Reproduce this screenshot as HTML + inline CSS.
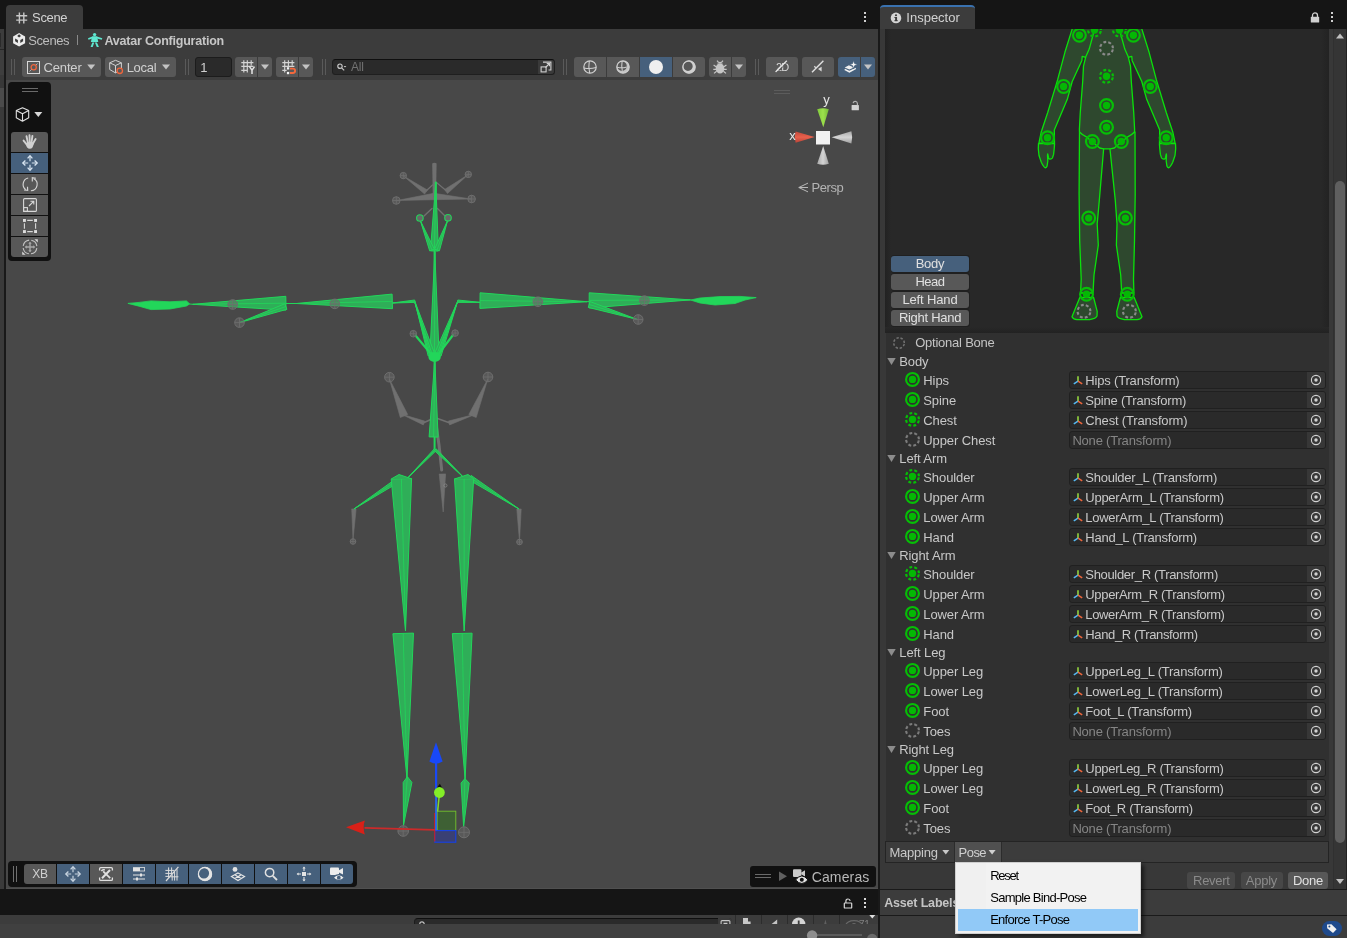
<!DOCTYPE html>
<html><head><meta charset="utf-8"><title>Unity</title>
<style>
*{box-sizing:border-box;margin:0;padding:0}
html,body{width:1347px;height:938px;overflow:hidden;background:#151515;font-family:"Liberation Sans",sans-serif;font-size:12px;color:#c4c4c4}
.abs{position:absolute}
#root{position:relative;width:1347px;height:938px;overflow:hidden;background:#151515}
svg{position:absolute;overflow:visible}
.t{position:absolute;white-space:nowrap;font-family:"Liberation Sans",sans-serif;will-change:transform}
</style></head><body>
<div id="root">
<div class="abs" style="left:0;top:29px;width:4px;height:860px;background:#3c3c3c"></div>
<div class="abs" style="left:0;top:33px;width:1px;height:14px;background:#2a2a2a"></div>
<div class="abs" style="left:0;top:49px;width:4px;height:1px;background:#262626"></div>
<div class="abs" style="left:0;top:50px;width:4px;height:25px;background:#3e3e3e"></div>
<div class="abs" style="left:0;top:75px;width:4px;height:13px;background:#383838"></div>
<div class="abs" style="left:0;top:88px;width:4px;height:19px;background:#4b4b4b"></div>
<div class="abs" style="left:0;top:107px;width:4px;height:782px;background:#3a3a3a"></div>
<div class="abs" style="left:4px;top:29px;width:2px;height:860px;background:#191919"></div>
<div class="abs" style="left:878px;top:29px;width:2px;height:909px;background:#191919"></div>

<div id="scene" class="abs" style="left:6px;top:0;width:872px;height:889px">
<div class="abs" style="left:0;top:5px;width:77px;height:24px;background:#3c3c3c;border-radius:4px 4px 0 0"></div>
<div class="abs" style="left:0;top:29px;width:872px;height:51px;background:#3c3c3c"></div>
<div id="viewport" class="abs" style="left:0;top:80px;width:872px;height:808px;background:#484848;overflow:hidden">
<div class="abs" style="left:-6px;top:-80px;width:1347px;height:938px">
<svg style="left:0;top:0" width="880" height="890" viewBox="0 0 880 890"><path d="M432.2 163.5Q434.5 162 436.6 163.5L436 196H432.8Z" fill="#707070"/><path d="M427.4 190.0L403.5 176.0L424.6 194.0Z" fill="#707070" stroke="#707070" stroke-width="0.6" stroke-linejoin="round"/><path d="M447.5 193.5L468.0 174.8L444.5 189.5Z" fill="#707070" stroke="#707070" stroke-width="0.6" stroke-linejoin="round"/><path d="M426.0 191.0L432.5 185.0" fill="none" stroke="#707070" stroke-width="1.2" stroke-linejoin="round" stroke-linecap="round"/><path d="M446.0 190.5L436.5 182.5" fill="none" stroke="#707070" stroke-width="1.2" stroke-linejoin="round" stroke-linecap="round"/><path d="M433.7 193.3L397.0 200.5L434.3 199.7Z" fill="#707070" stroke="#707070" stroke-width="0.6" stroke-linejoin="round"/><path d="M433.8 199.7L471.0 199.0L434.2 193.3Z" fill="#707070" stroke="#707070" stroke-width="0.6" stroke-linejoin="round"/><path d="M424.0 216.0L432.0 208.5" fill="none" stroke="#707070" stroke-width="1.4" stroke-linejoin="round" stroke-linecap="round"/><path d="M445.0 216.0L437.5 208.5" fill="none" stroke="#707070" stroke-width="1.4" stroke-linejoin="round" stroke-linecap="round"/><circle cx="403.3" cy="175.6" r="3.2" fill="#686868" fill-opacity="0.55" stroke="#6e6e6e" stroke-width="1"/><path d="M400.1 175.6H406.5M403.3 172.4V178.79999999999998" stroke="#6e6e6e" stroke-width="0.8"/><circle cx="468.3" cy="174.4" r="3.2" fill="#686868" fill-opacity="0.55" stroke="#6e6e6e" stroke-width="1"/><path d="M465.1 174.4H471.5M468.3 171.20000000000002V177.6" stroke="#6e6e6e" stroke-width="0.8"/><circle cx="396.3" cy="200.5" r="3.8" fill="#686868" fill-opacity="0.55" stroke="#6e6e6e" stroke-width="1"/><path d="M392.5 200.5H400.1M396.3 196.7V204.3" stroke="#6e6e6e" stroke-width="0.8"/><circle cx="471.6" cy="199" r="3.8" fill="#686868" fill-opacity="0.55" stroke="#6e6e6e" stroke-width="1"/><path d="M467.8 199H475.40000000000003M471.6 195.2V202.8" stroke="#6e6e6e" stroke-width="0.8"/><path d="M407.7 414.5L389.4 379.0L400.3 417.5Z" fill="#707070" stroke="#707070" stroke-width="0.6" stroke-linejoin="round"/><path d="M476.2 417.5L487.8 379.0L468.8 414.5Z" fill="#707070" stroke="#707070" stroke-width="0.6" stroke-linejoin="round"/><path d="M424.7 421.1L401.0 414.0L423.3 424.9Z" fill="#707070" stroke="#707070" stroke-width="0.6" stroke-linejoin="round"/><path d="M449.6 424.9L476.0 414.0L448.4 421.1Z" fill="#707070" stroke="#707070" stroke-width="0.6" stroke-linejoin="round"/><path d="M423.0 423.0L432.0 419.0" fill="none" stroke="#707070" stroke-width="1.6" stroke-linejoin="round" stroke-linecap="round"/><path d="M450.0 423.0L437.5 418.5" fill="none" stroke="#707070" stroke-width="1.6" stroke-linejoin="round" stroke-linecap="round"/><circle cx="389.4" cy="377.2" r="4.8" fill="#686868" fill-opacity="0.55" stroke="#6e6e6e" stroke-width="1"/><path d="M384.59999999999997 377.2H394.2M389.4 372.4V382.0" stroke="#6e6e6e" stroke-width="0.8"/><circle cx="488" cy="377" r="4.8" fill="#686868" fill-opacity="0.55" stroke="#6e6e6e" stroke-width="1"/><path d="M483.2 377H492.8M488 372.2V381.8" stroke="#6e6e6e" stroke-width="0.8"/><path d="M436.6 428.0L439.0 445.0L441.7 470.0" fill="none" stroke="#707070" stroke-width="3" stroke-linejoin="round" stroke-linecap="round"/><path d="M439.2 474.1L443.2 512.0L445.6 473.9Z" fill="#707070" stroke="#707070" stroke-width="0.6" stroke-linejoin="round"/><circle cx="445.4" cy="485.5" r="1.6" fill="none" stroke="#8c8c8c" stroke-width="0.7"/><path d="M351.7 508.9L353.0 540.0L356.1 509.1Z" fill="#707070" stroke="#707070" stroke-width="0.6" stroke-linejoin="round"/><path d="M516.8 509.0L519.5 541.0L521.2 509.0Z" fill="#707070" stroke="#707070" stroke-width="0.6" stroke-linejoin="round"/><circle cx="353" cy="541.5" r="2.8" fill="#686868" fill-opacity="0.55" stroke="#6e6e6e" stroke-width="1"/><path d="M350.2 541.5H355.8M353 538.7V544.3" stroke="#6e6e6e" stroke-width="0.8"/><circle cx="519.5" cy="542" r="2.8" fill="#686868" fill-opacity="0.55" stroke="#6e6e6e" stroke-width="1"/><path d="M516.7 542H522.3M519.5 539.2V544.8" stroke="#6e6e6e" stroke-width="0.8"/><path d="M435.8 182.5L434.6 250.0L434.6 450.0" fill="none" stroke="#22d65a" stroke-width="2" stroke-linejoin="round" stroke-linecap="round"/><path d="M438.4 251.1L435.8 182.5L430.4 250.9Z" fill="#2fae58" stroke="#22d65a" stroke-width="1" stroke-linejoin="round"/><path d="M434.4 251.0L435.8 182.5" stroke="#22d65a" stroke-width="0.8"/><path d="M439.2 357.0L434.8 252.0L429.8 357.0Z" fill="#2fae58" stroke="#22d65a" stroke-width="1" stroke-linejoin="round"/><path d="M434.5 357.0L434.8 252.0" stroke="#22d65a" stroke-width="0.8"/><path d="M438.1 437.1L434.8 359.0L429.1 436.9Z" fill="#2fae58" stroke="#22d65a" stroke-width="1" stroke-linejoin="round"/><path d="M433.6 437.0L434.8 359.0" stroke="#22d65a" stroke-width="0.8"/><path d="M434.3 249.1L420.3 220.5L429.7 250.9Z" fill="#2fae58" stroke="#22d65a" stroke-width="1" stroke-linejoin="round"/><path d="M432.0 250.0L420.3 220.5" stroke="#22d65a" stroke-width="0.8"/><path d="M439.4 250.8L447.6 220.5L434.6 249.2Z" fill="#2fae58" stroke="#22d65a" stroke-width="1" stroke-linejoin="round"/><path d="M437.0 250.0L447.6 220.5" stroke="#22d65a" stroke-width="0.8"/><circle cx="419.9" cy="218" r="3.3" fill="#686868" stroke="#22d65a" stroke-width="1.1"/><circle cx="448" cy="217.8" r="3.3" fill="#686868" stroke="#22d65a" stroke-width="1.1"/><path d="M434.8 354.0L414.8 301.2L428.2 356.0Z" fill="#2fae58" stroke="#22d65a" stroke-width="1" stroke-linejoin="round"/><path d="M431.5 355.0L414.8 301.2" stroke="#22d65a" stroke-width="0.8"/><path d="M441.0 356.2L457.7 301.2L434.4 353.8Z" fill="#2fae58" stroke="#22d65a" stroke-width="1" stroke-linejoin="round"/><path d="M437.7 355.0L457.7 301.2" stroke="#22d65a" stroke-width="0.8"/><path d="M432.4 355.1L415.0 303.0L429.6 355.9Z" fill="#2fae58" stroke="#22d65a" stroke-width="1" stroke-linejoin="round"/><path d="M431.0 355.5L415.0 303.0" stroke="#22d65a" stroke-width="0.8"/><path d="M439.4 356.0L457.0 303.0L436.6 355.0Z" fill="#2fae58" stroke="#22d65a" stroke-width="1" stroke-linejoin="round"/><path d="M438.0 355.5L457.0 303.0" stroke="#22d65a" stroke-width="0.8"/><path d="M415.5 335.5L431.0 354.0" fill="none" stroke="#22d65a" stroke-width="2.2" stroke-linejoin="round" stroke-linecap="round"/><path d="M453.0 335.0L438.5 354.0" fill="none" stroke="#22d65a" stroke-width="2.2" stroke-linejoin="round" stroke-linecap="round"/><ellipse cx="434.6" cy="357" rx="6.2" ry="5" fill="#22d65a"/><circle cx="413.3" cy="333.7" r="3.3" fill="#686868" fill-opacity="0.55" stroke="#6e6e6e" stroke-width="1"/><path d="M410.0 333.7H416.6M413.3 330.4V337.0" stroke="#6e6e6e" stroke-width="0.8"/><circle cx="455.1" cy="333.1" r="3.3" fill="#686868" fill-opacity="0.55" stroke="#6e6e6e" stroke-width="1"/><path d="M451.8 333.1H458.40000000000003M455.1 329.8V336.40000000000003" stroke="#6e6e6e" stroke-width="0.8"/><path d="M414.7 300.0L392.4 303.0L414.9 302.4Z" fill="#2fae58" stroke="#22d65a" stroke-width="1" stroke-linejoin="round"/><path d="M414.8 301.2L392.4 303.0" stroke="#22d65a" stroke-width="0.8"/><path d="M457.6 302.4L480.3 302.4L457.8 300.0Z" fill="#2fae58" stroke="#22d65a" stroke-width="1" stroke-linejoin="round"/><path d="M457.7 301.2L480.3 302.4" stroke="#22d65a" stroke-width="0.8"/><path d="M392.1 294.1L296.7 303.5L392.5 308.7Z" fill="#2fae58" stroke="#22d65a" stroke-width="1" stroke-linejoin="round"/><path d="M392.3 301.4L296.7 303.5" stroke="#22d65a" stroke-width="0.8"/><path d="M296.7 303.5L286.0 303.5" fill="none" stroke="#22d65a" stroke-width="1" stroke-linejoin="round" stroke-linecap="round"/><path d="M285.8 296.3L192.8 304.3L286.0 310.1Z" fill="#2fae58" stroke="#22d65a" stroke-width="1" stroke-linejoin="round"/><path d="M285.9 303.2L192.8 304.3" stroke="#22d65a" stroke-width="0.8"/><path d="M284.9 303.7L239.5 322.6L286.9 309.3Z" fill="#2fae58" stroke="#22d65a" stroke-width="1" stroke-linejoin="round"/><path d="M285.9 306.5L239.5 322.6" stroke="#22d65a" stroke-width="0.8"/><path d="M127.9 303.4L139 302.4L151 300.9L170 301.8L186.5 300.9L189.6 303.9L186.5 306L170 309L151 309.6L139 306.2Z" fill="#22d65a" stroke="#22d65a" stroke-width="0.8"/><path d="M192.8 304.3L189.6 304.0" fill="none" stroke="#22d65a" stroke-width="1" stroke-linejoin="round" stroke-linecap="round"/><circle cx="232.7" cy="304.5" r="4.8" fill="#686868" fill-opacity="0.55" stroke="#6e6e6e" stroke-width="1"/><path d="M227.89999999999998 304.5H237.5M232.7 299.7V309.3" stroke="#6e6e6e" stroke-width="0.8"/><circle cx="334.8" cy="303.9" r="4.8" fill="#686868" fill-opacity="0.55" stroke="#6e6e6e" stroke-width="1"/><path d="M330.0 303.9H339.6M334.8 299.09999999999997V308.7" stroke="#6e6e6e" stroke-width="0.8"/><circle cx="239.5" cy="322.6" r="4.8" fill="#686868" fill-opacity="0.55" stroke="#6e6e6e" stroke-width="1"/><path d="M234.7 322.6H244.3M239.5 317.8V327.40000000000003" stroke="#6e6e6e" stroke-width="0.8"/><path d="M479.9 308.4L586.9 301.7L480.1 292.8Z" fill="#2fae58" stroke="#22d65a" stroke-width="1" stroke-linejoin="round"/><path d="M480.0 300.6L586.9 301.7" stroke="#22d65a" stroke-width="0.8"/><path d="M586.9 301.7L589.2 301.5" fill="none" stroke="#22d65a" stroke-width="1" stroke-linejoin="round" stroke-linecap="round"/><path d="M589.2 308.0L690.5 299.9L589.2 292.8Z" fill="#2fae58" stroke="#22d65a" stroke-width="1" stroke-linejoin="round"/><path d="M589.2 300.4L690.5 299.9" stroke="#22d65a" stroke-width="0.8"/><path d="M588.3 307.4L637.5 319.5L590.1 301.6Z" fill="#2fae58" stroke="#22d65a" stroke-width="1" stroke-linejoin="round"/><path d="M589.2 304.5L637.5 319.5" stroke="#22d65a" stroke-width="0.8"/><path d="M690.5 300L700 298L720 296.6L740 296.4L756.2 297.6L745 300L735 303.5L715 305L700 303Z" fill="#22d65a" stroke="#22d65a" stroke-width="0.8"/><circle cx="537.9" cy="301.7" r="4.8" fill="#686868" fill-opacity="0.55" stroke="#6e6e6e" stroke-width="1"/><path d="M533.1 301.7H542.6999999999999M537.9 296.9V306.5" stroke="#6e6e6e" stroke-width="0.8"/><circle cx="644.4" cy="300.6" r="4.8" fill="#686868" fill-opacity="0.55" stroke="#6e6e6e" stroke-width="1"/><path d="M639.6 300.6H649.1999999999999M644.4 295.8V305.40000000000003" stroke="#6e6e6e" stroke-width="0.8"/><circle cx="638.2" cy="319.5" r="4.8" fill="#686868" fill-opacity="0.55" stroke="#6e6e6e" stroke-width="1"/><path d="M633.4000000000001 319.5H643.0M638.2 314.7V324.3" stroke="#6e6e6e" stroke-width="0.8"/><path d="M400.6 475.4L353.9 509.0L403.4 479.6Z" fill="#2fae58" stroke="#22d65a" stroke-width="1" stroke-linejoin="round"/><path d="M402.0 477.5L353.9 509.0" stroke="#22d65a" stroke-width="0.8"/><path d="M468.5 479.6L519.0 509.0L471.1 475.4Z" fill="#2fae58" stroke="#22d65a" stroke-width="1" stroke-linejoin="round"/><path d="M469.8 477.5L519.0 509.0" stroke="#22d65a" stroke-width="0.8"/><path d="M434.4 448.8L407.1 478.5L436.2 450.6Z" fill="#2fae58" stroke="#22d65a" stroke-width="1" stroke-linejoin="round"/><path d="M435.3 449.7L407.1 478.5" stroke="#22d65a" stroke-width="0.8"/><path d="M434.4 450.6L464.7 478.5L436.2 448.8Z" fill="#2fae58" stroke="#22d65a" stroke-width="1" stroke-linejoin="round"/><path d="M435.3 449.7L464.7 478.5" stroke="#22d65a" stroke-width="0.8"/><path d="M391.2 479.1L405.5 631.0L411.6 478.5Z" fill="#2fae58" stroke="#22d65a" stroke-width="1" stroke-linejoin="round"/><path d="M401.4 478.8L405.5 631.0" stroke="#22d65a" stroke-width="0.8"/><path d="M454.5 478.8L464.2 631.0L473.7 478.8Z" fill="#2fae58" stroke="#22d65a" stroke-width="1" stroke-linejoin="round"/><path d="M464.1 478.8L464.2 631.0" stroke="#22d65a" stroke-width="0.8"/><path d="M391.2 479L399 474.5L411.6 478.8" fill="#2fae58" stroke="#22d65a" stroke-width="1"/><path d="M454.5 479L468 474.5L473.6 478.8" fill="#2fae58" stroke="#22d65a" stroke-width="1"/><path d="M392.9 633.7L407.0 778.8L413.5 633.1Z" fill="#2fae58" stroke="#22d65a" stroke-width="1" stroke-linejoin="round"/><path d="M403.2 633.4L407.0 778.8" stroke="#22d65a" stroke-width="0.8"/><path d="M452.3 633.6L465.1 778.8L472.1 633.2Z" fill="#2fae58" stroke="#22d65a" stroke-width="1" stroke-linejoin="round"/><path d="M462.2 633.4L465.1 778.8" stroke="#22d65a" stroke-width="0.8"/><path d="M407.4 776.7L411.9 782.4L403.5 825.3L403.2 782.4Z" fill="#2fae58" stroke="#22d65a" stroke-width="1" stroke-linejoin="round"/><path d="M407.4 776.7L403.5 825.3" stroke="#22d65a" stroke-width="0.8"/><path d="M464.9 778.6L469.2 783.1L463.6 826.5L461.1 783.1Z" fill="#2fae58" stroke="#22d65a" stroke-width="1" stroke-linejoin="round"/><path d="M464.9 778.6L463.6 826.5" stroke="#22d65a" stroke-width="0.8"/><circle cx="403.2" cy="831" r="5.3" fill="#686868" fill-opacity="0.55" stroke="#6e6e6e" stroke-width="1"/><path d="M397.9 831H408.5M403.2 825.7V836.3" stroke="#6e6e6e" stroke-width="0.8"/><circle cx="464" cy="832.3" r="5.5" fill="#686868" fill-opacity="0.55" stroke="#6e6e6e" stroke-width="1"/><path d="M458.5 832.3H469.5M464 826.8V837.8" stroke="#6e6e6e" stroke-width="0.8"/><rect x="437.2" y="811.2" width="18.6" height="19.2" fill="#3e6034" stroke="#72c22c" stroke-width="0.9"/><rect x="434.8" y="830.6" width="21" height="11.6" fill="#3a4074" stroke="#1540e8" stroke-width="1.1"/><path d="M434.7 813V841.5" stroke="#c02028" stroke-width="1.2"/><path d="M436.1 830.4V760" stroke="#2a6ae8" stroke-width="2"/><path d="M436.1 790V760" stroke="#1848f8" stroke-width="2"/><path d="M429.4 761.5L436 742.2L442.6 761.5Q436 765.5 429.4 761.5Z" fill="#1848f8"/><path d="M434.9 829.8L364.5 827.8" stroke="#cc2a2a" stroke-width="1.8"/><path d="M364.8 820.6L346 827.3L364.8 834.4Q362.5 827.5 364.8 820.6Z" fill="#d82018"/><path d="M439.2 796L437.6 811.5" stroke="#84d830" stroke-width="1.5"/><path d="M436 789L439.8 783.8L443.2 789.5Z" fill="#0c0c0c"/><circle cx="439.4" cy="792.5" r="5.4" fill="#84ee28"/></svg>
<div class="abs" style="left:8px;top:82px;width:43px;height:178.6px;background:#111111;border-radius:4px"></div>
<div class="abs" style="left:22px;top:88px;width:16px;height:1px;background:#6a6a6a;"></div>
<div class="abs" style="left:22px;top:91px;width:16px;height:1px;background:#6a6a6a;"></div>
<svg style="left:15px;top:107px;" width="14" height="15" viewBox="0 0 14 15"><g transform="translate(0.500 0.000)"><path d="M7 0.7L13.2 3.6V10.8L7 14.2L0.8 10.8V3.6Z M0.8 3.6L7 6.8L13.2 3.6M7 6.8V14.2" fill="none" stroke="#e0e0e0" stroke-width="1.1" stroke-linejoin="round"/></g></svg>
<svg style="left:34px;top:112px;" width="8" height="5" viewBox="0 0 8 5"><g transform="translate(0.300 0.000)"><path d="M0 0H8L4 5Z" fill="#d8d8d8"/></g></svg>
<div class="abs" style="left:11px;top:132px;width:37px;height:20px;background:#585858;border-radius:3px 3px 0 0"></div>
<div class="abs" style="left:11px;top:153px;width:37px;height:20px;background:#46607c;border-radius:0"></div>
<div class="abs" style="left:11px;top:174px;width:37px;height:20px;background:#585858;border-radius:0"></div>
<div class="abs" style="left:11px;top:195px;width:37px;height:20px;background:#585858;border-radius:0"></div>
<div class="abs" style="left:11px;top:216px;width:37px;height:20px;background:#585858;border-radius:0"></div>
<div class="abs" style="left:11px;top:237px;width:37px;height:20px;background:#585858;border-radius:0 0 3px 3px"></div>
<svg style="left:22px;top:134px;" width="16" height="16" viewBox="0 0 16 16"><g stroke="#d0d0d0" stroke-width="1.9" stroke-linecap="round" fill="none"><path d="M4.8 10.6L1.6 6.6"/><path d="M5.9 8.6L4.5 2.2"/><path d="M7.7 8L7.5 1.2"/><path d="M9.5 8.4L10.4 2"/><path d="M10.8 9.8L13.6 5"/></g><path d="M3.6 9.2Q7.8 6.4 11.8 8.8Q11.4 14.8 7.8 14.8Q4.6 14.8 3.6 9.2Z" fill="#d0d0d0"/></svg>
<svg style="left:22px;top:155px;" width="16" height="16" viewBox="0 0 16 16"><path d="M8 1V15M1 8H15" stroke="#d8e4f0" stroke-width="1.2" stroke-dasharray="5.2 3.6"/><path d="M5.6 3.4L8 0.8L10.4 3.4M5.6 12.6L8 15.2L10.4 12.6M3.4 5.6L0.8 8L3.4 10.4M12.6 5.6L15.2 8L12.6 10.4" fill="none" stroke="#d8e4f0" stroke-width="1.3"/></svg>
<svg style="left:22px;top:176px;" width="16" height="16" viewBox="0 0 16 16"><g fill="none" stroke="#d4d4d4" stroke-width="1.15"><path d="M11.6 2.4A6.5 6.5 0 0 1 8.9 14.7"/><path d="M6.2 2A6.5 6.5 0 0 0 3.8 13.6"/><path d="M10.3 5.6V1.6L13.9 2.3"/><path d="M5.5 10.8L5.7 14.3L2 14"/></g></svg>
<svg style="left:23px;top:198px;" width="14" height="14" viewBox="0 0 14 14"><rect x="0.6" y="0.6" width="12.8" height="12.8" rx="1" fill="none" stroke="#d8d8d8" stroke-width="1.1"/><rect x="0.6" y="9.6" width="3.8" height="3.8" fill="none" stroke="#d8d8d8" stroke-width="1.1"/><path d="M6 8L10.6 3.4M7.4 3.2H10.8V6.6" fill="none" stroke="#d8d8d8" stroke-width="1.1"/></svg>
<svg style="left:23px;top:219px;" width="14" height="14" viewBox="0 0 14 14"><path d="M4.2 1.4H9.8M4.2 12.6H9.8M1.4 4.2V9.8M12.6 4.2V9.8" fill="none" stroke="#d8d8d8" stroke-width="1.1"/><g fill="#dedede"><rect x="0" y="0" width="2.9" height="2.9"/><rect x="11.1" y="0" width="2.9" height="2.9"/><rect x="0" y="11.1" width="2.9" height="2.9"/><rect x="11.1" y="11.1" width="2.9" height="2.9"/></g></svg>
<svg style="left:22px;top:239px;" width="16" height="16" viewBox="0 0 16 16"><circle cx="8" cy="8" r="6.9" fill="none" stroke="#c4c4c4" stroke-width="1.1" stroke-dasharray="8.6 2.24" stroke-dashoffset="-1.1"/><path d="M8 3.6V12.4M3.6 8H12.4" stroke="#a8a8a8" stroke-width="1.4"/><path d="M6.3 4.8L8 2.8L9.7 4.8Z M6.3 11.2L8 13.2L9.7 11.2Z M4.8 6.3L2.8 8L4.8 9.7Z M11.2 6.3L13.2 8L11.2 9.7Z" fill="#a8a8a8"/><path d="M12.4 0.2H15.8V3.6Z M3.6 15.8H0.2V12.4Z" fill="#d4d4d4"/></svg>
<div class="abs" style="left:774px;top:90px;width:16px;height:1px;background:#5c5c5c;"></div>
<div class="abs" style="left:774px;top:93px;width:16px;height:1px;background:#5c5c5c;"></div>
<svg style="left:0;top:0" width="880" height="220" viewBox="0 0 880 220"><defs>
<linearGradient id="gG" x1="0" x2="1"><stop offset="0" stop-color="#7fc93c"/><stop offset="0.5" stop-color="#9de04c"/><stop offset="1" stop-color="#74b838"/></linearGradient>
<linearGradient id="gR" y1="0" y2="1" x1="0" x2="0"><stop offset="0" stop-color="#c24a3c"/><stop offset="0.5" stop-color="#e8604c"/><stop offset="1" stop-color="#b84438"/></linearGradient>
<linearGradient id="gW" y1="0" y2="1" x1="0" x2="0"><stop offset="0" stop-color="#a8a8a8"/><stop offset="0.5" stop-color="#d4d4d4"/><stop offset="1" stop-color="#a0a0a0"/></linearGradient>
<linearGradient id="gW2" x1="0" x2="1"><stop offset="0" stop-color="#a8a8a8"/><stop offset="0.5" stop-color="#d4d4d4"/><stop offset="1" stop-color="#a0a0a0"/></linearGradient>
</defs>
<path d="M817.2 109.2Q823 107.2 828.8 109.2L823.3 127.2Z" fill="url(#gG)"/>
<path d="M795.6 131.6Q793.8 137.2 795.6 142.8L814.6 137Z" fill="url(#gR)"/>
<path d="M851.4 131.2Q853 137.2 851.4 143.4L831.6 137.2Z" fill="url(#gW)"/>
<path d="M817.2 163.8Q823 165.6 828.8 163.8L823.2 146Z" fill="url(#gW2)"/>
<rect x="816" y="131" width="14" height="13.5" fill="#f2f2f2"/></svg>
<div class="t" style="left:823px;top:91px;font-size:13px;line-height:17px;letter-spacing:-0.300px;color:#e8e8e8;"><span style="position:relative;left:0.20px">y</span></div>
<div class="t" style="left:789px;top:127px;font-size:13px;line-height:17px;letter-spacing:-0.500px;color:#e8e8e8;"><span style="position:relative;left:0.20px">x</span></div>
<svg style="left:851px;top:100px;" width="8" height="10" viewBox="0 0 8 10"><g transform="translate(0.500 0.500)"><rect x="0.1" y="4.5" width="7.3" height="5.2" rx="0.5" fill="#d2d2d2"/><path d="M5.9 4.8V2.8A2.2 2.2 0 0 0 1.6 2.6" fill="none" stroke="#b0b0b0" stroke-width="1.2"/></g></svg>
<svg style="left:798px;top:182px;" width="10.5" height="10" viewBox="0 0 10.5 10"><g transform="translate(0.000 0.500)"><path d="M10 0.6L0.8 5L10 9.4M0.8 5H10" fill="none" stroke="#b8b8b8" stroke-width="1"/></g></svg>
<div class="t" style="left:811px;top:179px;font-size:13px;line-height:17px;letter-spacing:-0.432px;color:#b4b4b4;"><span style="position:relative;left:0.50px">Persp</span></div>
<div class="abs" style="left:8px;top:861px;width:349px;height:26px;background:#111111;border-radius:4px"></div>
<div class="abs" style="left:13px;top:866px;width:1px;height:16px;background:#707070;"></div>
<div class="abs" style="left:16px;top:866px;width:1px;height:16px;background:#707070;"></div>
<div class="abs" style="left:24px;top:864px;width:32px;height:20px;background:#585858;border-radius:3px 0 0 3px"></div>
<div class="abs" style="left:57px;top:864px;width:32px;height:20px;background:#46607c;border-radius:0"></div>
<div class="abs" style="left:90px;top:864px;width:32px;height:20px;background:#585858;border-radius:0"></div>
<div class="abs" style="left:123px;top:864px;width:32px;height:20px;background:#46607c;border-radius:0"></div>
<div class="abs" style="left:156px;top:864px;width:32px;height:20px;background:#46607c;border-radius:0"></div>
<div class="abs" style="left:189px;top:864px;width:32px;height:20px;background:#46607c;border-radius:0"></div>
<div class="abs" style="left:222px;top:864px;width:32px;height:20px;background:#46607c;border-radius:0"></div>
<div class="abs" style="left:255px;top:864px;width:32px;height:20px;background:#46607c;border-radius:0"></div>
<div class="abs" style="left:288px;top:864px;width:32px;height:20px;background:#46607c;border-radius:0"></div>
<div class="abs" style="left:321px;top:864px;width:32px;height:20px;background:#46607c;border-radius:0 3px 3px 0"></div>
<div class="t" style="left:32px;top:866px;font-size:12px;line-height:16px;letter-spacing:-0.255px;color:#d0d0d0;"><span style="position:relative;left:0.25px">XB</span></div>
<svg style="left:65px;top:866px;" width="16" height="16" viewBox="0 0 16 16"><path d="M8 1V15M1 8H15" stroke="#c8d4e0" stroke-width="1.2" stroke-dasharray="5.2 3.6"/><path d="M5.6 3.4L8 0.8L10.4 3.4M5.6 12.6L8 15.2L10.4 12.6M3.4 5.6L0.8 8L3.4 10.4M12.6 5.6L15.2 8L12.6 10.4" fill="none" stroke="#c8d4e0" stroke-width="1.3"/></svg>
<svg style="left:98px;top:866px;" width="16" height="16" viewBox="0 0 16 16"><path d="M1.6 4.6V2.8Q1.6 1.6 2.8 1.6H13.2Q14.4 1.6 14.4 2.8V4.6M1.6 11.4V13.2Q1.6 14.4 2.8 14.4H13.2Q14.4 14.4 14.4 13.2V11.4" fill="none" stroke="#e0e0e0" stroke-width="1.3"/><path d="M4 12.2L12 4" stroke="#e0e0e0" stroke-width="2"/><path d="M5.2 5.4L12.2 12.2" stroke="#e0e0e0" stroke-width="1.7"/><path d="M3.4 5.2Q4.6 3 6.8 4" fill="none" stroke="#e0e0e0" stroke-width="1.5"/></svg>
<svg style="left:131px;top:866px;" width="16" height="16" viewBox="0 0 16 16"><rect x="2" y="1.2" width="12" height="4.2" fill="#e4e4e4"/><rect x="9" y="2" width="4.2" height="2.6" fill="#46607c"/><path d="M2 9H14M2 13H14" stroke="#e4e4e4" stroke-width="1.2"/><rect x="9" y="7.5" width="2" height="3" fill="#e4e4e4"/><rect x="5" y="11.5" width="2" height="3" fill="#e4e4e4"/></svg>
<svg style="left:164px;top:866px;" width="16" height="16" viewBox="0 0 16 16"><path d="M2 15L14.4 0.8" stroke="#dcdcdc" stroke-width="1.2"/><path d="M1.4 4.4H10.4M1.4 7.4H7.8M1.4 10.4H5.2M4.6 1.4V11.6M7.6 1.4V8" stroke="#dcdcdc" stroke-width="1"/><path d="M8.2 8.6V14.6M10.6 5.8V14.6M13 3.2V14.6M6.4 10.8H14.4" stroke="#dcdcdc" stroke-width="1"/></svg>
<svg style="left:197px;top:866px;" width="16" height="16" viewBox="0 0 16 16"><path fill-rule="evenodd" d="M8 0.9A7.1 7.1 0 1 0 8 15.1A7.1 7.1 0 1 0 8 0.9ZM6.9 2.1A5.2 5.2 0 1 1 6.9 12.5A5.2 5.2 0 1 1 6.9 2.1Z" fill="#e4e4e4"/><circle cx="8" cy="8" r="6.6" fill="none" stroke="#e4e4e4" stroke-width="1.2"/></svg>
<svg style="left:230px;top:866px;" width="16" height="16" viewBox="0 0 16 16"><circle cx="5" cy="3.4" r="2.4" fill="#e4e4e4"/><path d="M8 7L14.5 10.5L8 14.5L1.5 10.5Z M4.7 8.8L11.2 12.6M11.3 8.8L4.8 12.6" fill="none" stroke="#e4e4e4" stroke-width="1.2"/></svg>
<svg style="left:263px;top:866px;" width="16" height="16" viewBox="0 0 16 16"><circle cx="6.6" cy="6.6" r="4.2" fill="none" stroke="#e0e0e0" stroke-width="1.5"/><path d="M9.8 9.8L14 14" stroke="#e0e0e0" stroke-width="1.8"/></svg>
<svg style="left:296px;top:866px;" width="16" height="16" viewBox="0 0 16 16"><rect x="6" y="6" width="4" height="4" fill="#e4e4e4"/><path d="M8 1.5V5M8 11V14.5M1.5 8H5M11 8H14.5" stroke="#e4e4e4" stroke-width="1.1"/><path d="M6.4 2.6L8 0.6L9.6 2.6Z M6.4 13.4L8 15.4L9.6 13.4Z M2.6 6.4L0.6 8L2.6 9.6Z M13.4 6.4L15.4 8L13.4 9.6Z" fill="#e4e4e4"/></svg>
<svg style="left:329px;top:866px;" width="16" height="16" viewBox="0 0 16 16"><rect x="1" y="1.5" width="9" height="7.5" rx="1" fill="#ececec"/><path d="M10 4.2L14 2V8.6L10 6.4Z" fill="#ececec"/><path d="M4 11.8Q9.8 5.6 15.6 11.8Q9.8 17.2 4 11.8Z" fill="#ececec" stroke="#46607c" stroke-width="1.2"/><circle cx="9.8" cy="11.7" r="1.9" fill="#46607c"/></svg>
<div class="abs" style="left:750px;top:866px;width:126px;height:21px;background:#111111;border-radius:3px"></div>
<div class="abs" style="left:755px;top:874px;width:16px;height:1px;background:#6a6a6a;"></div>
<div class="abs" style="left:755px;top:877px;width:16px;height:1px;background:#6a6a6a;"></div>
<svg style="left:779px;top:871px;" width="8" height="9.4" viewBox="0 0 8 9.4"><g transform="translate(0.000 0.500)"><path d="M0 0L8 4.7L0 9.4Z" fill="#606060"/></g></svg>
<svg style="left:793px;top:869px;" width="15" height="15" viewBox="0 0 15 15"><rect x="0" y="0.3" width="8.4" height="7.8" rx="1" fill="#cacaca"/><path d="M8.2 3.4L12 1.2V7.4L8.2 5.2Z" fill="#cacaca"/><path d="M2.6 10.9Q8.8 3 15 10.9Q8.8 18 2.6 10.9Z" fill="#e4e4e4" stroke="#111" stroke-width="1"/><circle cx="8.8" cy="10.8" r="2" fill="#111"/></svg>
<div class="t" style="left:811px;top:868px;font-size:14px;line-height:18px;letter-spacing:0.144px;color:#b8b8b8;"><span style="position:relative;left:0.70px">Cameras</span></div>
</div>
</div>
<div class="abs" style="left:0;top:888px;width:872px;height:1px;background:#505050"></div>
<svg style="left:10px;top:12px;" width="11" height="11" viewBox="0 0 11 11"><g transform="translate(0.200 0.500)"><path d="M3.2 0V11M7.6 0V11M0 3.3H11M0 7.6H11" stroke="#c8c8c8" stroke-width="1.4" fill="none"/></g></svg>
<div class="t" style="left:26px;top:9px;font-size:13px;line-height:17px;letter-spacing:-0.372px;color:#d2d2d2;"><span style="position:relative;left:0.10px">Scene</span></div>
<div class="abs" style="left:857.8px;top:12px;width:2px;height:2px;background:#d0d0d0;"></div>
<div class="abs" style="left:857.8px;top:16px;width:2px;height:2px;background:#d0d0d0;"></div>
<div class="abs" style="left:857.8px;top:20px;width:2px;height:2px;background:#d0d0d0;"></div>
<svg style="left:6px;top:32px;" width="13" height="14" viewBox="0 0 13 14"><g transform="translate(0.600 0.800)"><path d="M6.5 0.2 L12.5 3.6 V10.4 L6.5 13.8 L0.5 10.4 V3.6 Z" fill="#ececec"/>
<path d="M6.5 1.5 L4.6 3.2 L6.5 4.7 L8.4 3.2Z M2.5 5.7V8.5L5.3 10.1V7.3Z M10.5 5.7V8.5L7.7 10.1V7.3Z" fill="#3c3c3c"/>
<path d="M3.4 12.4L5.2 13.8H3Z M9.6 12.4L7.8 13.8H10Z" fill="#3c3c3c"/></g></svg>
<div class="t" style="left:22px;top:32px;font-size:13px;line-height:17px;letter-spacing:-0.393px;color:#bdbdbd;"><span style="position:relative;left:0.20px">Scenes</span></div>
<div class="abs" style="left:71.3px;top:35px;width:1px;height:10px;background:#8a8a8a;"></div>
<svg style="left:82px;top:32px;" width="15" height="15" viewBox="0 0 15 15"><g transform="translate(0.000 0.700)"><g fill="#5ee6cf"><circle cx="6.6" cy="1.9" r="1.7"/>
<path d="M4.3 3.7L0 5.5L0.5 7L4.3 5.8Z M8.9 3.7L14.3 5.5L13.8 7L8.9 5.8Z"/>
<path d="M4.2 3.5H9L10.3 9.2H2.9Z"/>
<path d="M4.3 9.8H6.3L4.7 14.2H2.6Z M6.9 9.8H8.9L10.9 14.2H8.8Z"/></g></g></svg>
<div class="t" style="left:98px;top:33px;font-size:12.5px;line-height:16.5px;letter-spacing:-0.217px;color:#c6c6c6;font-weight:bold;"><span style="position:relative;left:0.50px">Avatar Configuration</span></div>
<div class="abs" style="left:5px;top:59px;width:1px;height:16px;background:#5a5a5a;"></div><div class="abs" style="left:8px;top:59px;width:1px;height:16px;background:#5a5a5a;"></div>
<div class="abs" style="left:16px;top:57px;width:79px;height:20px;background:#585858;border-radius:3px"></div>
<svg style="left:21px;top:61px;" width="13" height="13" viewBox="0 0 13 13"><rect x="0.5" y="0.5" width="12" height="12" fill="none" stroke="#d8d8d8" stroke-width="1"/><path d="M2.5 10.5L10.5 2.5" stroke="#b8b8b8" stroke-width="0.9"/><circle cx="6.7" cy="6.3" r="2.6" fill="#585858" stroke="#f0653c" stroke-width="1.3"/></svg>
<div class="t" style="left:37px;top:59px;font-size:13px;line-height:17px;letter-spacing:-0.170px;color:#d0d0d0;"><span style="position:relative;left:0.60px">Center</span></div>
<svg style="left:81px;top:64px;" width="8" height="5" viewBox="0 0 8 5"><g transform="translate(0.200 0.500)"><path d="M0 0H8L4.0 5Z" fill="#c4c4c4"/></g></svg>
<div class="abs" style="left:99px;top:57px;width:71px;height:20px;background:#585858;border-radius:3px"></div>
<svg style="left:103px;top:59px;" width="15" height="15" viewBox="0 0 15 15"><g transform="translate(0.000 0.500)"><path d="M6.5 0.8 L12.4 3.3 V10 L6.5 13.4 L0.7 10 V3.3Z M0.7 3.3 L6.5 6 L12.4 3.3 M6.5 6V13.4" fill="none" stroke="#d0d0d0" stroke-width="1"/><circle cx="10.8" cy="11.3" r="2.7" fill="#585858" stroke="#f0653c" stroke-width="1.3"/></g></svg>
<div class="t" style="left:120px;top:59px;font-size:13px;line-height:17px;letter-spacing:-0.295px;color:#d0d0d0;"><span style="position:relative;left:0.70px">Local</span></div>
<svg style="left:156px;top:64px;" width="8" height="5" viewBox="0 0 8 5"><g transform="translate(0.000 0.500)"><path d="M0 0H8L4.0 5Z" fill="#c4c4c4"/></g></svg>
<div class="abs" style="left:179px;top:59px;width:1px;height:16px;background:#5a5a5a;"></div><div class="abs" style="left:182px;top:59px;width:1px;height:16px;background:#5a5a5a;"></div>
<div class="abs" style="left:189px;top:57px;width:37px;height:20px;background:#2a2a2a;border-radius:3px;border:1px solid #1c1c1c"></div>
<div class="t" style="left:194px;top:59px;font-size:13px;line-height:17px;letter-spacing:-0.256px;color:#d0d0d0;"><span style="position:relative;left:0.30px">1</span></div>
<div class="abs" style="left:229px;top:57px;width:22px;height:20px;background:#585858;border-radius:3px 0 0 3px"></div>
<div class="abs" style="left:252px;top:57px;width:14px;height:20px;background:#585858;border-radius:0 3px 3px 0"></div>
<svg style="left:235px;top:60px;" width="14" height="14" viewBox="0 0 14 14"><path d="M2.8 0.2V12.5M6.3 0.2V12.5M10.2 0.2V5.6M0.3 2.6H12.4M0.3 6.3H12.4M0.3 10.3H6.8" stroke="#d4d4d4" stroke-width="1.15" fill="none"/><path d="M8.5 6.6L11 10.2L13.5 6.6M11 10.2V13.9" stroke="#e4e4e4" stroke-width="1.5" fill="none"/></svg>
<svg style="left:255px;top:64px;" width="8" height="5" viewBox="0 0 8 5"><g transform="translate(0.000 0.500)"><path d="M0 0H8L4.0 5Z" fill="#c4c4c4"/></g></svg>
<div class="abs" style="left:270px;top:57px;width:22px;height:20px;background:#585858;border-radius:3px 0 0 3px"></div>
<div class="abs" style="left:293px;top:57px;width:14px;height:20px;background:#585858;border-radius:0 3px 3px 0"></div>
<svg style="left:276px;top:60px;" width="15" height="15" viewBox="0 0 15 15"><path d="M2.7 0.2V12.5M6.4 0.2V6.6M10.2 0.2V5.6M0.3 2.6H12.4M0.3 6.3H12.4M0.3 10.3H4.6" stroke="#d4d4d4" stroke-width="1.15" fill="none"/><rect x="4.9" y="7.2" width="2.3" height="2.3" fill="#f4f4f4"/><rect x="4.9" y="11.9" width="2.3" height="2.3" fill="#f4f4f4"/><path d="M8 8.6H10.9A2.2 2.2 0 0 1 10.9 13H8" stroke="#f4683c" stroke-width="1.9" fill="none"/></svg>
<svg style="left:296px;top:64px;" width="8" height="5" viewBox="0 0 8 5"><g transform="translate(0.000 0.500)"><path d="M0 0H8L4.0 5Z" fill="#c4c4c4"/></g></svg>
<div class="abs" style="left:316px;top:59px;width:1px;height:16px;background:#5a5a5a;"></div><div class="abs" style="left:319px;top:59px;width:1px;height:16px;background:#5a5a5a;"></div>
<div class="abs" style="left:326px;top:59px;width:223px;height:16px;background:#2a2a2a;border-radius:3.5px;border:1px solid #1f1f1f;border-top-color:#0f0f0f"></div>
<div class="abs" style="left:532px;top:60px;width:16px;height:14px;background:#3a3a3a;border-radius:0 3px 3px 0"></div>
<svg style="left:331px;top:63px;" width="10" height="9" viewBox="0 0 10 9"><g transform="translate(0.000 0.200)"><circle cx="3" cy="3" r="2.2" fill="none" stroke="#c8c8c8" stroke-width="1.2"/><path d="M4.6 4.6L7.2 7.2" stroke="#c8c8c8" stroke-width="1.2"/><path d="M6.6 2.7H9.4L8 4.2Z" fill="#c8c8c8"/></g></svg>
<div class="t" style="left:345px;top:59px;font-size:12px;line-height:16px;letter-spacing:-0.245px;color:#727272;"><span style="position:relative;left:0.00px">All</span></div>
<svg style="left:534px;top:61px;" width="11" height="11" viewBox="0 0 11 11"><g transform="translate(0.500 0.500)"><path d="M2.5 0.6H10.4V8.5H8" fill="none" stroke="#d0d0d0" stroke-width="1.1"/><rect x="0.6" y="5.4" width="5" height="5" fill="none" stroke="#d0d0d0" stroke-width="1.1"/><path d="M5 6L9 2M6.2 2H9V4.8" fill="none" stroke="#d0d0d0" stroke-width="1.1"/></g></svg>
<div class="abs" style="left:557px;top:59px;width:1px;height:16px;background:#5a5a5a;"></div><div class="abs" style="left:560px;top:59px;width:1px;height:16px;background:#5a5a5a;"></div>
<div class="abs" style="left:568px;top:57px;width:32px;height:20px;background:#585858;border-radius:3px 0 0 3px"></div>
<div class="abs" style="left:601px;top:57px;width:32px;height:20px;background:#585858;"></div>
<div class="abs" style="left:634px;top:57px;width:32px;height:20px;background:#46607c;"></div>
<div class="abs" style="left:667px;top:57px;width:32px;height:20px;background:#585858;border-radius:0 3px 3px 0"></div>
<svg style="left:577px;top:60px;" width="14" height="14" viewBox="0 0 14 14"><circle cx="7" cy="7" r="6.2" fill="none" stroke="#d0d0d0" stroke-width="1.2"/><path d="M6.3 0.9Q5.2 7 6.7 13.1M0.9 7.9Q7 9.4 13.1 7.5" fill="none" stroke="#d0d0d0" stroke-width="1.05"/></svg>
<svg style="left:610px;top:60px;" width="14" height="14" viewBox="0 0 14 14"><path fill-rule="evenodd" d="M7 0.8A6.2 6.2 0 1 0 7 13.2A6.2 6.2 0 1 0 7 0.8ZM6 1.4A4.8 4.8 0 1 1 6 11A4.8 4.8 0 1 1 6 1.4Z" fill="#c4c4c4"/><circle cx="7" cy="7" r="6.2" fill="none" stroke="#d0d0d0" stroke-width="1.2"/><path d="M6.1 1.2Q5.3 6 6.3 10.8M1.2 7.2Q6 8.5 10.7 6.9" fill="none" stroke="#d0d0d0" stroke-width="1.05"/></svg>
<svg style="left:643px;top:60px;" width="14" height="14" viewBox="0 0 14 14"><circle cx="7" cy="7" r="7" fill="#efefef"/></svg>
<svg style="left:676px;top:60px;" width="14" height="14" viewBox="0 0 14 14"><path fill-rule="evenodd" d="M7 0.6A6.4 6.4 0 1 0 7 13.4A6.4 6.4 0 1 0 7 0.6ZM6 1.6A4.7 4.7 0 1 1 6 11A4.7 4.7 0 1 1 6 1.6Z" fill="#d0d0d0"/><circle cx="7" cy="7" r="6.2" fill="none" stroke="#d0d0d0" stroke-width="1.2"/></svg>
<div class="abs" style="left:703px;top:57px;width:22px;height:20px;background:#585858;border-radius:3px 0 0 3px"></div>
<div class="abs" style="left:726px;top:57px;width:14px;height:20px;background:#585858;border-radius:0 3px 3px 0"></div>
<svg style="left:707px;top:60px;" width="14" height="14" viewBox="0 0 14 14"><ellipse cx="7" cy="8.4" rx="4.3" ry="5.2" fill="#c6c6c6"/><path d="M4.2 3.6A2.9 2.6 0 0 1 9.8 3.6Z" fill="#c6c6c6"/><path d="M0.6 5L3.4 7M13.4 5L10.6 7M0.3 9.3H3M13.7 9.3H11M1 13.4L3.6 11.2M13 13.4L10.4 11.2M4 0.6L5.4 2.2M10 0.6L8.6 2.2" stroke="#c6c6c6" stroke-width="1.2" fill="none"/></svg>
<svg style="left:729px;top:64px;" width="8" height="5" viewBox="0 0 8 5"><g transform="translate(0.000 0.500)"><path d="M0 0H8L4.0 5Z" fill="#c4c4c4"/></g></svg>
<div class="abs" style="left:749px;top:59px;width:1px;height:16px;background:#5a5a5a;"></div><div class="abs" style="left:752px;top:59px;width:1px;height:16px;background:#5a5a5a;"></div>
<div class="abs" style="left:760px;top:57px;width:32px;height:20px;background:#585858;border-radius:3px"></div>
<div class="t" style="left:769px;top:60px;font-size:11px;line-height:15px;letter-spacing:-0.730px;color:#d8d8d8;"><span style="position:relative;left:0.90px">2D</span></div>
<svg style="left:760px;top:57px;" width="32" height="20" viewBox="0 0 32 20"><path d="M9.6 15L20.8 3.8" stroke="#e0e0e0" stroke-width="1.4"/><path d="M10.6 16L21.8 4.8" stroke="#585858" stroke-width="0.9"/></svg>
<div class="abs" style="left:796px;top:57px;width:32px;height:20px;background:#585858;border-radius:3px"></div>
<svg style="left:796px;top:57px;" width="32" height="20" viewBox="0 0 32 20"><path d="M10 15.2L21.4 3.8" stroke="#e0e0e0" stroke-width="1.4"/><path d="M16 12L19.6 9.8V14.4Z" fill="#d8d8d8"/><path d="M12.4 9.2L14 11.4" stroke="#d8d8d8" stroke-width="1.3"/></svg>
<div class="abs" style="left:832px;top:57px;width:22px;height:20px;background:#46607c;border-radius:3px 0 0 3px"></div>
<div class="abs" style="left:855px;top:57px;width:14px;height:20px;background:#46607c;border-radius:0 3px 3px 0"></div>
<svg style="left:838px;top:60px;" width="13" height="12" viewBox="0 0 13 12"><g transform="translate(0.400 0.600)"><path d="M0.3 6.8L4.6 4.6L9.4 6.8L5 9Z" fill="#f0f0f0"/><path d="M0.3 8.8L5 11.2L11.4 7.8" stroke="#f0f0f0" stroke-width="1.6" fill="none"/><path d="M9.2 -0.4L10.3 2.9L13.6 4L10.3 5.1L9.2 8.4L8.1 5.1L4.8 4L8.1 2.9Z" fill="#f6f6f6" stroke="#46607c" stroke-width="0.9"/></g></svg>
<svg style="left:858px;top:64px;" width="8" height="5" viewBox="0 0 8 5"><g transform="translate(0.000 0.500)"><path d="M0 0H8L4.0 5Z" fill="#c4c4c4"/></g></svg>
</div>

<div class="abs" style="left:0px;top:915px;width:878px;height:9px;background:#3c3c3c;"></div>
<div class="abs" style="left:0px;top:924px;width:878px;height:14px;background:#404040;"></div>
<div class="abs" style="left:6px;top:915px;width:872px;height:9px;overflow:hidden"><div class="abs" style="left:408px;top:3px;width:318px;height:16px;background:#2a2a2a;border-radius:4px;border:1px solid #1c1c1c;border-top-color:#0f0f0f"></div><div class="abs" style="left:712px;top:3px;width:14px;height:16px;background:#3a3a3a;border-radius:0 3px 3px 0"></div><svg style="left:413px;top:6px;" width="6" height="6" viewBox="0 0 6 6"><circle cx="3" cy="3" r="2.2" fill="none" stroke="#c0c0c0" stroke-width="1.2"/></svg><svg style="left:714px;top:5px;" width="10" height="10" viewBox="0 0 10 10"><g transform="translate(0.500 0.000)"><rect x="0.6" y="0.6" width="8.8" height="8.8" rx="1" fill="none" stroke="#c8c8c8" stroke-width="1.1"/><path d="M3 3.4H6.4V6.6M6.4 3.4L2.6 7" fill="none" stroke="#c8c8c8" stroke-width="1.1"/></g></svg><div class="abs" style="left:729px;top:0px;width:1px;height:9px;background:#2c2c2c;"></div><div class="abs" style="left:755px;top:0px;width:1px;height:9px;background:#2c2c2c;"></div><div class="abs" style="left:780.5px;top:0px;width:1px;height:9px;background:#2c2c2c;"></div><div class="abs" style="left:806.5px;top:0px;width:1px;height:9px;background:#2c2c2c;"></div><div class="abs" style="left:832.5px;top:0px;width:1px;height:9px;background:#2c2c2c;"></div><svg style="left:735px;top:3px;" width="9" height="8" viewBox="0 0 9 8"><g transform="translate(0.600 0.000)"><path d="M1.4 0H6.4V3.4H9V8H1.4Z" fill="#c8c8c8"/></g></svg><svg style="left:763px;top:4px;" width="8" height="6" viewBox="0 0 8 6"><g transform="translate(0.800 0.500)"><path d="M0 6L7.4 0V6Z" fill="#c4c4c4"/></g></svg><svg style="left:786px;top:2px;" width="14" height="14" viewBox="0 0 14 14"><g transform="translate(0.000 0.500)"><circle cx="6.7" cy="6.7" r="6.7" fill="#d4d4d4"/><rect x="5.8" y="3" width="1.8" height="5" fill="#3c3c3c"/></g></svg><svg style="left:814px;top:4px;" width="11" height="6" viewBox="0 0 11 6"><g transform="translate(0.000 0.500)"><path d="M5.4 0L6.6 4.6H4.2Z M0.4 4.4H10.4V6H0.4Z" fill="#606060"/></g></svg><svg style="left:840px;top:4px;" width="18" height="8" viewBox="0 0 18 8"><g transform="translate(0.000 0.500)"><ellipse cx="8" cy="5.6" rx="8" ry="4.4" fill="none" stroke="#686868" stroke-width="1.3"/><circle cx="8" cy="6" r="2.4" fill="#686868"/></g></svg><div class="t" style="left:853px;top:3px;font-size:10px;line-height:14px;letter-spacing:-0.197px;color:#808080;"><span style="position:relative;left:0.00px">71</span></div></div>
<svg style="left:869px;top:915px;" width="6" height="3.6" viewBox="0 0 6 3.6"><g transform="translate(0.300 0.000)"><path d="M0 0H6L3 3.6Z" fill="#e0e0e0"/></g></svg>
<div class="abs" style="left:812px;top:934px;width:50px;height:2px;background:#5c5c5c;"></div>
<svg style="left:806px;top:930px;" width="10.4" height="10.4" viewBox="0 0 10.4 10.4"><g transform="translate(0.900 0.200)"><circle cx="5.2" cy="5.2" r="5.2" fill="#8e8e8e"/></g></svg>
<svg style="left:867px;top:933px;" width="10.4" height="10.4" viewBox="0 0 10.4 10.4"><g transform="translate(0.000 0.800)"><circle cx="5.2" cy="5.2" r="5.2" fill="#6a6a6a"/></g></svg>
<svg style="left:843px;top:898px;" width="9" height="11" viewBox="0 0 9 11"><g transform="translate(0.500 0.000)"><rect x="0.8" y="5" width="7.4" height="5" rx="0.6" fill="none" stroke="#d8d8d8" stroke-width="1.2"/><path d="M2.4 5V3.2A2.1 2.1 0 0 1 6.6 3" fill="none" stroke="#d8d8d8" stroke-width="1.2"/></g></svg>
<div class="abs" style="left:864px;top:897.5px;width:2px;height:2px;background:#d8d8d8;"></div>
<div class="abs" style="left:864px;top:901.5px;width:2px;height:2px;background:#d8d8d8;"></div>
<div class="abs" style="left:864px;top:905.5px;width:2px;height:2px;background:#d8d8d8;"></div>

<div id="insp">
<div class="abs" style="left:880px;top:5px;width:95px;height:24px;background:#3c3c3c;border-radius:4px 4px 0 0;border-top:2px solid #3a72b0"></div>
<div class="abs" style="left:880px;top:29px;width:467px;height:909px;background:#383838"></div>
<svg style="left:890px;top:12px;" width="10.6" height="10.6" viewBox="0 0 12 12"><g transform="translate(0.792 0.679)"><circle cx="6" cy="6" r="6" fill="#d4d4d4"/><rect x="5" y="5" width="2.2" height="4.6" fill="#3c3c3c"/><rect x="4.2" y="8.6" width="3.8" height="1.1" fill="#3c3c3c"/><rect x="4.2" y="5" width="2" height="1.1" fill="#3c3c3c"/><circle cx="6" cy="3" r="1.25" fill="#3c3c3c"/></g></svg>
<div class="t" style="left:906px;top:9px;font-size:13px;line-height:17px;letter-spacing:0.003px;color:#d2d2d2;"><span style="position:relative;left:0.30px">Inspector</span></div>
<svg style="left:1310px;top:12px;" width="9" height="11" viewBox="0 0 9 11"><g transform="translate(0.500 0.000)"><rect x="0.3" y="4.8" width="8.4" height="5.8" rx="0.6" fill="#d0d0d0"/><path d="M2 5V3.4A2.5 2.5 0 0 1 7 3.4V5" fill="none" stroke="#d0d0d0" stroke-width="1.3"/></g></svg>
<div class="abs" style="left:1331px;top:12px;width:2px;height:2px;background:#d0d0d0;"></div>
<div class="abs" style="left:1331px;top:16px;width:2px;height:2px;background:#d0d0d0;"></div>
<div class="abs" style="left:1331px;top:20px;width:2px;height:2px;background:#d0d0d0;"></div>
<div class="abs" style="left:885px;top:29px;width:444px;height:301px;background:#282828;background:linear-gradient(90deg,#222 0,#282828 6px,#282828 436px,#232323 444px)"></div>
<svg style="left:0;top:0" width="1347" height="330" viewBox="0 0 1347 330"><defs><clipPath id="cpv"><rect x="885" y="29" width="444" height="300"/></clipPath></defs><g clip-path="url(#cpv)"><path d="M1079.5 132 L1079.1 194 L1079.7 241 L1081.2 279 L1080.6 293 L1093 293 L1094 275 L1098.3 245.2 L1097.2 223.9 L1099.3 200.4 L1103.6 149.2 L1103.6 140 Z" fill="#2e482e" stroke="#0be20b" stroke-width="1.3" stroke-linejoin="round"/><path d="M1135 132 L1135.2 194 L1134.5 241 L1133.5 279 L1133.9 293 L1121.7 293 L1120.7 275 L1116.4 245.2 L1117 223.9 L1115.3 200.4 L1110 149.2 L1110 140 Z" fill="#2e482e" stroke="#0be20b" stroke-width="1.3" stroke-linejoin="round"/><path d="M1079.8 297.5 L1072 316.7 Q1073 319.2 1077 319.6 L1089.7 319.6 Q1096 318.5 1097 316 L1097.2 311.3 L1093.6 297.5 Z" fill="#2e482e" stroke="#0be20b" stroke-width="1.3" stroke-linejoin="round"/><path d="M1134.2 297.5 L1142 316.7 Q1141 319.2 1137 319.6 L1124.3 319.6 Q1118 318.5 1117 316 L1116.8 311.3 L1120.4 297.5 Z" fill="#2e482e" stroke="#0be20b" stroke-width="1.3" stroke-linejoin="round"/><path d="M1075 20 L1064.9 52.3 L1057.6 79.9 L1047.8 112.3 L1041.3 131.7 L1038.9 143.1 L1054.5 143.1 L1054.3 130 L1067.3 99.3 L1072.2 81.5 L1081.9 60.4 L1082.2 56.4 L1088 58 L1094.5 34 L1095 24 Z" fill="#2e482e" stroke="#0be20b" stroke-width="1.3" stroke-linejoin="round"/><path d="M1139 20 L1149.1 52.3 L1156.4 79.9 L1166.2 112.3 L1172.7 131.7 L1175.1 143.1 L1159.5 143.1 L1159.7 130 L1146.7 99.3 L1141.8 81.5 L1132.1 60.4 L1131.8 56.4 L1126 58 L1119.5 34 L1119 24 Z" fill="#2e482e" stroke="#0be20b" stroke-width="1.3" stroke-linejoin="round"/><path d="M1038.5 143.6 L1038.3 148.8 L1039 155.5 L1041.3 162.2 Q1043.5 166.8 1045.2 167.8 Q1046.6 167.4 1047.1 166 L1047.8 161 L1047.5 155.5 L1047.7 153.8 L1048.5 157.7 Q1049 159.2 1050.1 159.1 Q1051.8 158.9 1052.4 158 L1053.6 154.4 L1054.2 148.8 L1054.6 143.6 Z" fill="#2e482e" stroke="#0be20b" stroke-width="1.3" stroke-linejoin="round"/><path d="M1175.5 143.6 L1175.7 148.8 L1175.0 155.5 L1172.7 162.2 Q1170.5 166.8 1168.8 167.8 Q1167.4 167.4 1166.9 166.0 L1166.2 161.0 L1166.5 155.5 L1166.3 153.8 L1165.5 157.7 Q1165.0 159.2 1163.9 159.1 Q1162.2 158.9 1161.6 158.0 L1160.4 154.4 L1159.8 148.8 L1159.4 143.6 Z" fill="#2e482e" stroke="#0be20b" stroke-width="1.3" stroke-linejoin="round"/><path d="M1093 20 L1093.2 34.5 L1089.2 49.1 L1085.9 56.4 L1083.5 66.1 L1082.7 81.5 L1080.3 112.3 L1079.4 129.3 L1079.5 132 Q1083 135.5 1085.9 136.6 L1099.7 148 L1103.8 148.8 L1110.2 148.8 L1114.3 148 L1128.1 136.6 Q1131 135.5 1134.5 132 L1134.6 129.3 L1133.7 112.3 L1131.3 81.5 L1130.5 66.1 L1128.1 56.4 L1124.8 49.1 L1120.8 34.5 L1121 20 Z" fill="#2e482e" stroke="#0be20b" stroke-width="1.3" stroke-linejoin="round"/><circle cx="1079.4" cy="35.3" r="6.4" fill="none" stroke="#06c006" stroke-width="2.2"/><circle cx="1079.4" cy="35.3" r="3.7" fill="#04b804"/><circle cx="1133.4" cy="35.3" r="6.4" fill="none" stroke="#06c006" stroke-width="2.2"/><circle cx="1133.4" cy="35.3" r="3.7" fill="#04b804"/><circle cx="1106.5" cy="48.3" r="6.4" fill="none" stroke="#8a8a8a" stroke-width="2.1" stroke-dasharray="2.9 2.127" stroke-dashoffset="-1.06"/><circle cx="1106.5" cy="76.3" r="6.4" fill="none" stroke="#06c006" stroke-width="2.2" stroke-dasharray="2.9 2.127" stroke-dashoffset="-1.06"/><circle cx="1106.5" cy="76.3" r="3.7" fill="#04b804"/><circle cx="1106.5" cy="105.5" r="6.4" fill="none" stroke="#06c006" stroke-width="2.2"/><circle cx="1106.5" cy="105.5" r="3.7" fill="#04b804"/><circle cx="1106.5" cy="127.2" r="6.4" fill="none" stroke="#06c006" stroke-width="2.2"/><circle cx="1106.5" cy="127.2" r="3.7" fill="#04b804"/><circle cx="1063.6" cy="86.4" r="6.4" fill="none" stroke="#06c006" stroke-width="2.2"/><circle cx="1063.6" cy="86.4" r="3.7" fill="#04b804"/><circle cx="1150.3" cy="86.4" r="6.4" fill="none" stroke="#06c006" stroke-width="2.2"/><circle cx="1150.3" cy="86.4" r="3.7" fill="#04b804"/><circle cx="1047.5" cy="137.7" r="6.4" fill="none" stroke="#06c006" stroke-width="2.2"/><circle cx="1047.5" cy="137.7" r="3.7" fill="#04b804"/><circle cx="1166.2" cy="137.7" r="6.4" fill="none" stroke="#06c006" stroke-width="2.2"/><circle cx="1166.2" cy="137.7" r="3.7" fill="#04b804"/><circle cx="1092.4" cy="141.5" r="6.4" fill="none" stroke="#06c006" stroke-width="2.2"/><circle cx="1092.4" cy="141.5" r="3.7" fill="#04b804"/><circle cx="1121.3" cy="141.5" r="6.4" fill="none" stroke="#06c006" stroke-width="2.2"/><circle cx="1121.3" cy="141.5" r="3.7" fill="#04b804"/><circle cx="1094.5" cy="30" r="6.4" fill="none" stroke="#06c006" stroke-width="2.2" stroke-dasharray="2.9 2.127" stroke-dashoffset="-1.06"/><circle cx="1094.5" cy="30" r="3.7" fill="#04b804"/><circle cx="1119.5" cy="30" r="6.4" fill="none" stroke="#06c006" stroke-width="2.2" stroke-dasharray="2.9 2.127" stroke-dashoffset="-1.06"/><circle cx="1119.5" cy="30" r="3.7" fill="#04b804"/><circle cx="1088.7" cy="218.1" r="6.4" fill="none" stroke="#06c006" stroke-width="2.2"/><circle cx="1088.7" cy="218.1" r="3.7" fill="#04b804"/><circle cx="1125.4" cy="218.1" r="6.4" fill="none" stroke="#06c006" stroke-width="2.2"/><circle cx="1125.4" cy="218.1" r="3.7" fill="#04b804"/><circle cx="1086.5" cy="294.3" r="6.4" fill="none" stroke="#06c006" stroke-width="2.2"/><circle cx="1086.5" cy="294.3" r="3.7" fill="#04b804"/><circle cx="1127.3" cy="294.3" r="6.4" fill="none" stroke="#06c006" stroke-width="2.2"/><circle cx="1127.3" cy="294.3" r="3.7" fill="#04b804"/><circle cx="1084" cy="311.3" r="6.4" fill="none" stroke="#8a8a8a" stroke-width="2.1" stroke-dasharray="2.9 2.127" stroke-dashoffset="-1.06"/><circle cx="1129.4" cy="311.3" r="6.4" fill="none" stroke="#8a8a8a" stroke-width="2.1" stroke-dasharray="2.9 2.127" stroke-dashoffset="-1.06"/></g></svg>
<div class="abs" style="left:885px;top:327px;width:444px;height:6px;background:#242424;background:linear-gradient(#282828,#222222)"></div>
<div class="abs" style="left:890.5px;top:255px;width:79px;height:18px;background:#202020;border-radius:3px"></div>
<div class="abs" style="left:891px;top:256px;width:78px;height:16px;background:#46607c;border-radius:3px"></div>
<div class="t" style="left:915px;top:255px;font-size:13px;line-height:17px;letter-spacing:-0.257px;color:#e0e0e0;"><span style="position:relative;left:0.70px">Body</span></div>
<div class="abs" style="left:890.5px;top:273px;width:79px;height:18px;background:#202020;border-radius:3px"></div>
<div class="abs" style="left:891px;top:274px;width:78px;height:16px;background:#585858;border-radius:3px"></div>
<div class="t" style="left:915px;top:273px;font-size:13px;line-height:17px;letter-spacing:-0.519px;color:#e0e0e0;"><span style="position:relative;left:0.50px">Head</span></div>
<div class="abs" style="left:890.5px;top:291px;width:79px;height:18px;background:#202020;border-radius:3px"></div>
<div class="abs" style="left:891px;top:292px;width:78px;height:16px;background:#585858;border-radius:3px"></div>
<div class="t" style="left:902px;top:291px;font-size:13px;line-height:17px;letter-spacing:-0.141px;color:#e0e0e0;"><span style="position:relative;left:0.45px">Left Hand</span></div>
<div class="abs" style="left:890.5px;top:309px;width:79px;height:18px;background:#202020;border-radius:3px"></div>
<div class="abs" style="left:891px;top:310px;width:78px;height:16px;background:#585858;border-radius:3px"></div>
<div class="t" style="left:898px;top:309px;font-size:13px;line-height:17px;letter-spacing:-0.284px;color:#e0e0e0;"><span style="position:relative;left:0.90px">Right Hand</span></div>
<div class="abs" style="left:886px;top:333px;width:443px;height:508px;background:#303030;"></div>
<svg style="left:891px;top:335px;" width="16" height="16" viewBox="0 0 16 16"><circle cx="8" cy="8" r="5.3" fill="none" stroke="#727272" stroke-width="1.5" stroke-dasharray="2.4 1.763" stroke-dashoffset="-0.88"/></svg>
<div class="t" style="left:915px;top:334px;font-size:13px;line-height:17px;letter-spacing:-0.230px;color:#c4c4c4;"><span style="position:relative;left:0.20px">Optional Bone</span></div>
<svg style="left:887px;top:357px;" width="9" height="8" viewBox="0 0 9 8"><g transform="translate(0.000 0.500)"><path d="M0.3 0.5H8.7L4.5 7.6Z" fill="#8c8c8c"/></g></svg>
<div class="t" style="left:899px;top:353px;font-size:13px;line-height:17px;letter-spacing:-0.128px;color:#c8c8c8;"><span style="position:relative;left:0.30px">Body</span></div>
<svg style="left:904px;top:371px;" width="16" height="16" viewBox="0 0 16 16"><g transform="translate(0.500 0.400)"><circle cx="8" cy="8" r="6.4" fill="none" stroke="#06be06" stroke-width="2.2"/><circle cx="8" cy="8" r="3.7" fill="#04b804"/></g></svg>
<div class="t" style="left:923px;top:372px;font-size:13px;line-height:17px;letter-spacing:-0.094px;color:#c8c8c8;"><span style="position:relative;left:0.30px">Hips</span></div>
<div class="abs" style="left:1069px;top:371px;width:257px;height:18px;background:#2a2a2a;border-radius:3px;border:1px solid #202020"></div>
<div class="abs" style="left:1307px;top:372px;width:18px;height:16px;background:#373737;border-radius:0 2px 2px 0"></div>
<svg style="left:1310px;top:374px;" width="12" height="12" viewBox="0 0 12 12"><circle cx="6" cy="6" r="4.6" fill="none" stroke="#d2d2d2" stroke-width="1.1"/><circle cx="6" cy="6" r="1.7" fill="#d2d2d2"/></svg>
<svg style="left:1073px;top:375px;" width="10" height="10" viewBox="0 0 10 10"><g transform="translate(0.000 0.500)"><path d="M5 5.6V0.8" stroke="#9be040" stroke-width="1.5"/><path d="M5 5.6L0.8 8.4" stroke="#56b8f0" stroke-width="1.5"/><path d="M5 5.6L9.2 8.4" stroke="#f0683c" stroke-width="1.5"/></g></svg>
<div class="t" style="left:1085px;top:372px;font-size:13px;line-height:17px;letter-spacing:-0.177px;color:#c8c8c8;"><span style="position:relative;left:0.30px">Hips (Transform)</span></div>
<svg style="left:904px;top:391px;" width="16" height="16" viewBox="0 0 16 16"><g transform="translate(0.500 0.400)"><circle cx="8" cy="8" r="6.4" fill="none" stroke="#06be06" stroke-width="2.2"/><circle cx="8" cy="8" r="3.7" fill="#04b804"/></g></svg>
<div class="t" style="left:923px;top:392px;font-size:13px;line-height:17px;letter-spacing:-0.096px;color:#c8c8c8;"><span style="position:relative;left:0.30px">Spine</span></div>
<div class="abs" style="left:1069px;top:391px;width:257px;height:18px;background:#2a2a2a;border-radius:3px;border:1px solid #202020"></div>
<div class="abs" style="left:1307px;top:392px;width:18px;height:16px;background:#373737;border-radius:0 2px 2px 0"></div>
<svg style="left:1310px;top:394px;" width="12" height="12" viewBox="0 0 12 12"><circle cx="6" cy="6" r="4.6" fill="none" stroke="#d2d2d2" stroke-width="1.1"/><circle cx="6" cy="6" r="1.7" fill="#d2d2d2"/></svg>
<svg style="left:1073px;top:395px;" width="10" height="10" viewBox="0 0 10 10"><g transform="translate(0.000 0.500)"><path d="M5 5.6V0.8" stroke="#9be040" stroke-width="1.5"/><path d="M5 5.6L0.8 8.4" stroke="#56b8f0" stroke-width="1.5"/><path d="M5 5.6L9.2 8.4" stroke="#f0683c" stroke-width="1.5"/></g></svg>
<div class="t" style="left:1085px;top:392px;font-size:13px;line-height:17px;letter-spacing:-0.198px;color:#c8c8c8;"><span style="position:relative;left:0.30px">Spine (Transform)</span></div>
<svg style="left:904px;top:411px;" width="16" height="16" viewBox="0 0 16 16"><g transform="translate(0.500 0.400)"><circle cx="8" cy="8" r="6.4" fill="none" stroke="#06be06" stroke-width="2.2" stroke-dasharray="2.9 2.127" stroke-dashoffset="-1.06"/><circle cx="8" cy="8" r="3.7" fill="#04b804"/></g></svg>
<div class="t" style="left:923px;top:412px;font-size:13px;line-height:17px;letter-spacing:-0.098px;color:#c8c8c8;"><span style="position:relative;left:0.30px">Chest</span></div>
<div class="abs" style="left:1069px;top:411px;width:257px;height:18px;background:#2a2a2a;border-radius:3px;border:1px solid #202020"></div>
<div class="abs" style="left:1307px;top:412px;width:18px;height:16px;background:#373737;border-radius:0 2px 2px 0"></div>
<svg style="left:1310px;top:414px;" width="12" height="12" viewBox="0 0 12 12"><circle cx="6" cy="6" r="4.6" fill="none" stroke="#d2d2d2" stroke-width="1.1"/><circle cx="6" cy="6" r="1.7" fill="#d2d2d2"/></svg>
<svg style="left:1073px;top:415px;" width="10" height="10" viewBox="0 0 10 10"><g transform="translate(0.000 0.500)"><path d="M5 5.6V0.8" stroke="#9be040" stroke-width="1.5"/><path d="M5 5.6L0.8 8.4" stroke="#56b8f0" stroke-width="1.5"/><path d="M5 5.6L9.2 8.4" stroke="#f0683c" stroke-width="1.5"/></g></svg>
<div class="t" style="left:1085px;top:412px;font-size:13px;line-height:17px;letter-spacing:-0.169px;color:#c8c8c8;"><span style="position:relative;left:0.30px">Chest (Transform)</span></div>
<svg style="left:904px;top:431px;" width="16" height="16" viewBox="0 0 16 16"><g transform="translate(0.500 0.400)"><circle cx="8" cy="8" r="6.4" fill="none" stroke="#7c7c7c" stroke-width="2.1" stroke-dasharray="2.9 2.127" stroke-dashoffset="-1.06"/></g></svg>
<div class="t" style="left:923px;top:432px;font-size:13px;line-height:17px;letter-spacing:-0.096px;color:#c8c8c8;"><span style="position:relative;left:0.30px">Upper Chest</span></div>
<div class="abs" style="left:1069px;top:431px;width:257px;height:18px;background:#2a2a2a;border-radius:3px;border:1px solid #202020"></div>
<div class="abs" style="left:1307px;top:432px;width:18px;height:16px;background:#373737;border-radius:0 2px 2px 0"></div>
<svg style="left:1310px;top:434px;" width="12" height="12" viewBox="0 0 12 12"><circle cx="6" cy="6" r="4.6" fill="none" stroke="#d2d2d2" stroke-width="1.1"/><circle cx="6" cy="6" r="1.7" fill="#d2d2d2"/></svg>
<div class="t" style="left:1072px;top:432px;font-size:13px;line-height:17px;letter-spacing:-0.200px;color:#858585;"><span style="position:relative;left:0.40px">None (Transform)</span></div>
<svg style="left:887px;top:454px;" width="9" height="8" viewBox="0 0 9 8"><g transform="translate(0.000 0.500)"><path d="M0.3 0.5H8.7L4.5 7.6Z" fill="#8c8c8c"/></g></svg>
<div class="t" style="left:899px;top:450px;font-size:13px;line-height:17px;letter-spacing:-0.105px;color:#c8c8c8;"><span style="position:relative;left:0.30px">Left Arm</span></div>
<svg style="left:904px;top:468px;" width="16" height="16" viewBox="0 0 16 16"><g transform="translate(0.500 0.400)"><circle cx="8" cy="8" r="6.4" fill="none" stroke="#06be06" stroke-width="2.2" stroke-dasharray="2.9 2.127" stroke-dashoffset="-1.06"/><circle cx="8" cy="8" r="3.7" fill="#04b804"/></g></svg>
<div class="t" style="left:923px;top:469px;font-size:13px;line-height:17px;letter-spacing:-0.094px;color:#c8c8c8;"><span style="position:relative;left:0.30px">Shoulder</span></div>
<div class="abs" style="left:1069px;top:468px;width:257px;height:18px;background:#2a2a2a;border-radius:3px;border:1px solid #202020"></div>
<div class="abs" style="left:1307px;top:469px;width:18px;height:16px;background:#373737;border-radius:0 2px 2px 0"></div>
<svg style="left:1310px;top:471px;" width="12" height="12" viewBox="0 0 12 12"><circle cx="6" cy="6" r="4.6" fill="none" stroke="#d2d2d2" stroke-width="1.1"/><circle cx="6" cy="6" r="1.7" fill="#d2d2d2"/></svg>
<svg style="left:1073px;top:472px;" width="10" height="10" viewBox="0 0 10 10"><g transform="translate(0.000 0.500)"><path d="M5 5.6V0.8" stroke="#9be040" stroke-width="1.5"/><path d="M5 5.6L0.8 8.4" stroke="#56b8f0" stroke-width="1.5"/><path d="M5 5.6L9.2 8.4" stroke="#f0683c" stroke-width="1.5"/></g></svg>
<div class="t" style="left:1085px;top:469px;font-size:13px;line-height:17px;letter-spacing:-0.242px;color:#c8c8c8;"><span style="position:relative;left:0.30px">Shoulder_L (Transform)</span></div>
<svg style="left:904px;top:488px;" width="16" height="16" viewBox="0 0 16 16"><g transform="translate(0.500 0.400)"><circle cx="8" cy="8" r="6.4" fill="none" stroke="#06be06" stroke-width="2.2"/><circle cx="8" cy="8" r="3.7" fill="#04b804"/></g></svg>
<div class="t" style="left:923px;top:489px;font-size:13px;line-height:17px;letter-spacing:-0.099px;color:#c8c8c8;"><span style="position:relative;left:0.30px">Upper Arm</span></div>
<div class="abs" style="left:1069px;top:488px;width:257px;height:18px;background:#2a2a2a;border-radius:3px;border:1px solid #202020"></div>
<div class="abs" style="left:1307px;top:489px;width:18px;height:16px;background:#373737;border-radius:0 2px 2px 0"></div>
<svg style="left:1310px;top:491px;" width="12" height="12" viewBox="0 0 12 12"><circle cx="6" cy="6" r="4.6" fill="none" stroke="#d2d2d2" stroke-width="1.1"/><circle cx="6" cy="6" r="1.7" fill="#d2d2d2"/></svg>
<svg style="left:1073px;top:492px;" width="10" height="10" viewBox="0 0 10 10"><g transform="translate(0.000 0.500)"><path d="M5 5.6V0.8" stroke="#9be040" stroke-width="1.5"/><path d="M5 5.6L0.8 8.4" stroke="#56b8f0" stroke-width="1.5"/><path d="M5 5.6L9.2 8.4" stroke="#f0683c" stroke-width="1.5"/></g></svg>
<div class="t" style="left:1085px;top:489px;font-size:13px;line-height:17px;letter-spacing:-0.261px;color:#c8c8c8;"><span style="position:relative;left:0.30px">UpperArm_L (Transform)</span></div>
<svg style="left:904px;top:508px;" width="16" height="16" viewBox="0 0 16 16"><g transform="translate(0.500 0.400)"><circle cx="8" cy="8" r="6.4" fill="none" stroke="#06be06" stroke-width="2.2"/><circle cx="8" cy="8" r="3.7" fill="#04b804"/></g></svg>
<div class="t" style="left:923px;top:509px;font-size:13px;line-height:17px;letter-spacing:-0.099px;color:#c8c8c8;"><span style="position:relative;left:0.30px">Lower Arm</span></div>
<div class="abs" style="left:1069px;top:508px;width:257px;height:18px;background:#2a2a2a;border-radius:3px;border:1px solid #202020"></div>
<div class="abs" style="left:1307px;top:509px;width:18px;height:16px;background:#373737;border-radius:0 2px 2px 0"></div>
<svg style="left:1310px;top:511px;" width="12" height="12" viewBox="0 0 12 12"><circle cx="6" cy="6" r="4.6" fill="none" stroke="#d2d2d2" stroke-width="1.1"/><circle cx="6" cy="6" r="1.7" fill="#d2d2d2"/></svg>
<svg style="left:1073px;top:512px;" width="10" height="10" viewBox="0 0 10 10"><g transform="translate(0.000 0.500)"><path d="M5 5.6V0.8" stroke="#9be040" stroke-width="1.5"/><path d="M5 5.6L0.8 8.4" stroke="#56b8f0" stroke-width="1.5"/><path d="M5 5.6L9.2 8.4" stroke="#f0683c" stroke-width="1.5"/></g></svg>
<div class="t" style="left:1085px;top:509px;font-size:13px;line-height:17px;letter-spacing:-0.270px;color:#c8c8c8;"><span style="position:relative;left:0.30px">LowerArm_L (Transform)</span></div>
<svg style="left:904px;top:528px;" width="16" height="16" viewBox="0 0 16 16"><g transform="translate(0.500 0.400)"><circle cx="8" cy="8" r="6.4" fill="none" stroke="#06be06" stroke-width="2.2"/><circle cx="8" cy="8" r="3.7" fill="#04b804"/></g></svg>
<div class="t" style="left:923px;top:529px;font-size:13px;line-height:17px;letter-spacing:-0.112px;color:#c8c8c8;"><span style="position:relative;left:0.30px">Hand</span></div>
<div class="abs" style="left:1069px;top:528px;width:257px;height:18px;background:#2a2a2a;border-radius:3px;border:1px solid #202020"></div>
<div class="abs" style="left:1307px;top:529px;width:18px;height:16px;background:#373737;border-radius:0 2px 2px 0"></div>
<svg style="left:1310px;top:531px;" width="12" height="12" viewBox="0 0 12 12"><circle cx="6" cy="6" r="4.6" fill="none" stroke="#d2d2d2" stroke-width="1.1"/><circle cx="6" cy="6" r="1.7" fill="#d2d2d2"/></svg>
<svg style="left:1073px;top:532px;" width="10" height="10" viewBox="0 0 10 10"><g transform="translate(0.000 0.500)"><path d="M5 5.6V0.8" stroke="#9be040" stroke-width="1.5"/><path d="M5 5.6L0.8 8.4" stroke="#56b8f0" stroke-width="1.5"/><path d="M5 5.6L9.2 8.4" stroke="#f0683c" stroke-width="1.5"/></g></svg>
<div class="t" style="left:1085px;top:529px;font-size:13px;line-height:17px;letter-spacing:-0.249px;color:#c8c8c8;"><span style="position:relative;left:0.30px">Hand_L (Transform)</span></div>
<svg style="left:887px;top:551px;" width="9" height="8" viewBox="0 0 9 8"><g transform="translate(0.000 0.500)"><path d="M0.3 0.5H8.7L4.5 7.6Z" fill="#8c8c8c"/></g></svg>
<div class="t" style="left:899px;top:547px;font-size:13px;line-height:17px;letter-spacing:-0.110px;color:#c8c8c8;"><span style="position:relative;left:0.30px">Right Arm</span></div>
<svg style="left:904px;top:565px;" width="16" height="16" viewBox="0 0 16 16"><g transform="translate(0.500 0.400)"><circle cx="8" cy="8" r="6.4" fill="none" stroke="#06be06" stroke-width="2.2" stroke-dasharray="2.9 2.127" stroke-dashoffset="-1.06"/><circle cx="8" cy="8" r="3.7" fill="#04b804"/></g></svg>
<div class="t" style="left:923px;top:566px;font-size:13px;line-height:17px;letter-spacing:-0.094px;color:#c8c8c8;"><span style="position:relative;left:0.30px">Shoulder</span></div>
<div class="abs" style="left:1069px;top:565px;width:257px;height:18px;background:#2a2a2a;border-radius:3px;border:1px solid #202020"></div>
<div class="abs" style="left:1307px;top:566px;width:18px;height:16px;background:#373737;border-radius:0 2px 2px 0"></div>
<svg style="left:1310px;top:568px;" width="12" height="12" viewBox="0 0 12 12"><circle cx="6" cy="6" r="4.6" fill="none" stroke="#d2d2d2" stroke-width="1.1"/><circle cx="6" cy="6" r="1.7" fill="#d2d2d2"/></svg>
<svg style="left:1073px;top:569px;" width="10" height="10" viewBox="0 0 10 10"><g transform="translate(0.000 0.500)"><path d="M5 5.6V0.8" stroke="#9be040" stroke-width="1.5"/><path d="M5 5.6L0.8 8.4" stroke="#56b8f0" stroke-width="1.5"/><path d="M5 5.6L9.2 8.4" stroke="#f0683c" stroke-width="1.5"/></g></svg>
<div class="t" style="left:1085px;top:566px;font-size:13px;line-height:17px;letter-spacing:-0.322px;color:#c8c8c8;"><span style="position:relative;left:0.30px">Shoulder_R (Transform)</span></div>
<svg style="left:904px;top:585px;" width="16" height="16" viewBox="0 0 16 16"><g transform="translate(0.500 0.400)"><circle cx="8" cy="8" r="6.4" fill="none" stroke="#06be06" stroke-width="2.2"/><circle cx="8" cy="8" r="3.7" fill="#04b804"/></g></svg>
<div class="t" style="left:923px;top:586px;font-size:13px;line-height:17px;letter-spacing:-0.099px;color:#c8c8c8;"><span style="position:relative;left:0.30px">Upper Arm</span></div>
<div class="abs" style="left:1069px;top:585px;width:257px;height:18px;background:#2a2a2a;border-radius:3px;border:1px solid #202020"></div>
<div class="abs" style="left:1307px;top:586px;width:18px;height:16px;background:#373737;border-radius:0 2px 2px 0"></div>
<svg style="left:1310px;top:588px;" width="12" height="12" viewBox="0 0 12 12"><circle cx="6" cy="6" r="4.6" fill="none" stroke="#d2d2d2" stroke-width="1.1"/><circle cx="6" cy="6" r="1.7" fill="#d2d2d2"/></svg>
<svg style="left:1073px;top:589px;" width="10" height="10" viewBox="0 0 10 10"><g transform="translate(0.000 0.500)"><path d="M5 5.6V0.8" stroke="#9be040" stroke-width="1.5"/><path d="M5 5.6L0.8 8.4" stroke="#56b8f0" stroke-width="1.5"/><path d="M5 5.6L9.2 8.4" stroke="#f0683c" stroke-width="1.5"/></g></svg>
<div class="t" style="left:1085px;top:586px;font-size:13px;line-height:17px;letter-spacing:-0.335px;color:#c8c8c8;"><span style="position:relative;left:0.30px">UpperArm_R (Transform)</span></div>
<svg style="left:904px;top:605px;" width="16" height="16" viewBox="0 0 16 16"><g transform="translate(0.500 0.400)"><circle cx="8" cy="8" r="6.4" fill="none" stroke="#06be06" stroke-width="2.2"/><circle cx="8" cy="8" r="3.7" fill="#04b804"/></g></svg>
<div class="t" style="left:923px;top:606px;font-size:13px;line-height:17px;letter-spacing:-0.099px;color:#c8c8c8;"><span style="position:relative;left:0.30px">Lower Arm</span></div>
<div class="abs" style="left:1069px;top:605px;width:257px;height:18px;background:#2a2a2a;border-radius:3px;border:1px solid #202020"></div>
<div class="abs" style="left:1307px;top:606px;width:18px;height:16px;background:#373737;border-radius:0 2px 2px 0"></div>
<svg style="left:1310px;top:608px;" width="12" height="12" viewBox="0 0 12 12"><circle cx="6" cy="6" r="4.6" fill="none" stroke="#d2d2d2" stroke-width="1.1"/><circle cx="6" cy="6" r="1.7" fill="#d2d2d2"/></svg>
<svg style="left:1073px;top:609px;" width="10" height="10" viewBox="0 0 10 10"><g transform="translate(0.000 0.500)"><path d="M5 5.6V0.8" stroke="#9be040" stroke-width="1.5"/><path d="M5 5.6L0.8 8.4" stroke="#56b8f0" stroke-width="1.5"/><path d="M5 5.6L9.2 8.4" stroke="#f0683c" stroke-width="1.5"/></g></svg>
<div class="t" style="left:1085px;top:606px;font-size:13px;line-height:17px;letter-spacing:-0.344px;color:#c8c8c8;"><span style="position:relative;left:0.30px">LowerArm_R (Transform)</span></div>
<svg style="left:904px;top:625px;" width="16" height="16" viewBox="0 0 16 16"><g transform="translate(0.500 0.400)"><circle cx="8" cy="8" r="6.4" fill="none" stroke="#06be06" stroke-width="2.2"/><circle cx="8" cy="8" r="3.7" fill="#04b804"/></g></svg>
<div class="t" style="left:923px;top:626px;font-size:13px;line-height:17px;letter-spacing:-0.112px;color:#c8c8c8;"><span style="position:relative;left:0.30px">Hand</span></div>
<div class="abs" style="left:1069px;top:625px;width:257px;height:18px;background:#2a2a2a;border-radius:3px;border:1px solid #202020"></div>
<div class="abs" style="left:1307px;top:626px;width:18px;height:16px;background:#373737;border-radius:0 2px 2px 0"></div>
<svg style="left:1310px;top:628px;" width="12" height="12" viewBox="0 0 12 12"><circle cx="6" cy="6" r="4.6" fill="none" stroke="#d2d2d2" stroke-width="1.1"/><circle cx="6" cy="6" r="1.7" fill="#d2d2d2"/></svg>
<svg style="left:1073px;top:629px;" width="10" height="10" viewBox="0 0 10 10"><g transform="translate(0.000 0.500)"><path d="M5 5.6V0.8" stroke="#9be040" stroke-width="1.5"/><path d="M5 5.6L0.8 8.4" stroke="#56b8f0" stroke-width="1.5"/><path d="M5 5.6L9.2 8.4" stroke="#f0683c" stroke-width="1.5"/></g></svg>
<div class="t" style="left:1085px;top:626px;font-size:13px;line-height:17px;letter-spacing:-0.356px;color:#c8c8c8;"><span style="position:relative;left:0.30px">Hand_R (Transform)</span></div>
<svg style="left:887px;top:648px;" width="9" height="8" viewBox="0 0 9 8"><g transform="translate(0.000 0.500)"><path d="M0.3 0.5H8.7L4.5 7.6Z" fill="#8c8c8c"/></g></svg>
<div class="t" style="left:899px;top:644px;font-size:13px;line-height:17px;letter-spacing:-0.102px;color:#c8c8c8;"><span style="position:relative;left:0.30px">Left Leg</span></div>
<svg style="left:904px;top:662px;" width="16" height="16" viewBox="0 0 16 16"><g transform="translate(0.500 0.400)"><circle cx="8" cy="8" r="6.4" fill="none" stroke="#06be06" stroke-width="2.2"/><circle cx="8" cy="8" r="3.7" fill="#04b804"/></g></svg>
<div class="t" style="left:923px;top:663px;font-size:13px;line-height:17px;letter-spacing:-0.097px;color:#c8c8c8;"><span style="position:relative;left:0.30px">Upper Leg</span></div>
<div class="abs" style="left:1069px;top:662px;width:257px;height:18px;background:#2a2a2a;border-radius:3px;border:1px solid #202020"></div>
<div class="abs" style="left:1307px;top:663px;width:18px;height:16px;background:#373737;border-radius:0 2px 2px 0"></div>
<svg style="left:1310px;top:665px;" width="12" height="12" viewBox="0 0 12 12"><circle cx="6" cy="6" r="4.6" fill="none" stroke="#d2d2d2" stroke-width="1.1"/><circle cx="6" cy="6" r="1.7" fill="#d2d2d2"/></svg>
<svg style="left:1073px;top:666px;" width="10" height="10" viewBox="0 0 10 10"><g transform="translate(0.000 0.500)"><path d="M5 5.6V0.8" stroke="#9be040" stroke-width="1.5"/><path d="M5 5.6L0.8 8.4" stroke="#56b8f0" stroke-width="1.5"/><path d="M5 5.6L9.2 8.4" stroke="#f0683c" stroke-width="1.5"/></g></svg>
<div class="t" style="left:1085px;top:663px;font-size:13px;line-height:17px;letter-spacing:-0.213px;color:#c8c8c8;"><span style="position:relative;left:0.30px">UpperLeg_L (Transform)</span></div>
<svg style="left:904px;top:682px;" width="16" height="16" viewBox="0 0 16 16"><g transform="translate(0.500 0.400)"><circle cx="8" cy="8" r="6.4" fill="none" stroke="#06be06" stroke-width="2.2"/><circle cx="8" cy="8" r="3.7" fill="#04b804"/></g></svg>
<div class="t" style="left:923px;top:683px;font-size:13px;line-height:17px;letter-spacing:-0.097px;color:#c8c8c8;"><span style="position:relative;left:0.30px">Lower Leg</span></div>
<div class="abs" style="left:1069px;top:682px;width:257px;height:18px;background:#2a2a2a;border-radius:3px;border:1px solid #202020"></div>
<div class="abs" style="left:1307px;top:683px;width:18px;height:16px;background:#373737;border-radius:0 2px 2px 0"></div>
<svg style="left:1310px;top:685px;" width="12" height="12" viewBox="0 0 12 12"><circle cx="6" cy="6" r="4.6" fill="none" stroke="#d2d2d2" stroke-width="1.1"/><circle cx="6" cy="6" r="1.7" fill="#d2d2d2"/></svg>
<svg style="left:1073px;top:686px;" width="10" height="10" viewBox="0 0 10 10"><g transform="translate(0.000 0.500)"><path d="M5 5.6V0.8" stroke="#9be040" stroke-width="1.5"/><path d="M5 5.6L0.8 8.4" stroke="#56b8f0" stroke-width="1.5"/><path d="M5 5.6L9.2 8.4" stroke="#f0683c" stroke-width="1.5"/></g></svg>
<div class="t" style="left:1085px;top:683px;font-size:13px;line-height:17px;letter-spacing:-0.213px;color:#c8c8c8;"><span style="position:relative;left:0.30px">LowerLeg_L (Transform)</span></div>
<svg style="left:904px;top:702px;" width="16" height="16" viewBox="0 0 16 16"><g transform="translate(0.500 0.400)"><circle cx="8" cy="8" r="6.4" fill="none" stroke="#06be06" stroke-width="2.2"/><circle cx="8" cy="8" r="3.7" fill="#04b804"/></g></svg>
<div class="t" style="left:923px;top:703px;font-size:13px;line-height:17px;letter-spacing:-0.094px;color:#c8c8c8;"><span style="position:relative;left:0.30px">Foot</span></div>
<div class="abs" style="left:1069px;top:702px;width:257px;height:18px;background:#2a2a2a;border-radius:3px;border:1px solid #202020"></div>
<div class="abs" style="left:1307px;top:703px;width:18px;height:16px;background:#373737;border-radius:0 2px 2px 0"></div>
<svg style="left:1310px;top:705px;" width="12" height="12" viewBox="0 0 12 12"><circle cx="6" cy="6" r="4.6" fill="none" stroke="#d2d2d2" stroke-width="1.1"/><circle cx="6" cy="6" r="1.7" fill="#d2d2d2"/></svg>
<svg style="left:1073px;top:706px;" width="10" height="10" viewBox="0 0 10 10"><g transform="translate(0.000 0.500)"><path d="M5 5.6V0.8" stroke="#9be040" stroke-width="1.5"/><path d="M5 5.6L0.8 8.4" stroke="#56b8f0" stroke-width="1.5"/><path d="M5 5.6L9.2 8.4" stroke="#f0683c" stroke-width="1.5"/></g></svg>
<div class="t" style="left:1085px;top:703px;font-size:13px;line-height:17px;letter-spacing:-0.245px;color:#c8c8c8;"><span style="position:relative;left:0.30px">Foot_L (Transform)</span></div>
<svg style="left:904px;top:722px;" width="16" height="16" viewBox="0 0 16 16"><g transform="translate(0.500 0.400)"><circle cx="8" cy="8" r="6.4" fill="none" stroke="#7c7c7c" stroke-width="2.1" stroke-dasharray="2.9 2.127" stroke-dashoffset="-1.06"/></g></svg>
<div class="t" style="left:923px;top:723px;font-size:13px;line-height:17px;letter-spacing:-0.099px;color:#c8c8c8;"><span style="position:relative;left:0.30px">Toes</span></div>
<div class="abs" style="left:1069px;top:722px;width:257px;height:18px;background:#2a2a2a;border-radius:3px;border:1px solid #202020"></div>
<div class="abs" style="left:1307px;top:723px;width:18px;height:16px;background:#373737;border-radius:0 2px 2px 0"></div>
<svg style="left:1310px;top:725px;" width="12" height="12" viewBox="0 0 12 12"><circle cx="6" cy="6" r="4.6" fill="none" stroke="#d2d2d2" stroke-width="1.1"/><circle cx="6" cy="6" r="1.7" fill="#d2d2d2"/></svg>
<div class="t" style="left:1072px;top:723px;font-size:13px;line-height:17px;letter-spacing:-0.200px;color:#858585;"><span style="position:relative;left:0.40px">None (Transform)</span></div>
<svg style="left:887px;top:745px;" width="9" height="8" viewBox="0 0 9 8"><g transform="translate(0.000 0.500)"><path d="M0.3 0.5H8.7L4.5 7.6Z" fill="#8c8c8c"/></g></svg>
<div class="t" style="left:899px;top:741px;font-size:13px;line-height:17px;letter-spacing:-0.107px;color:#c8c8c8;"><span style="position:relative;left:0.30px">Right Leg</span></div>
<svg style="left:904px;top:759px;" width="16" height="16" viewBox="0 0 16 16"><g transform="translate(0.500 0.400)"><circle cx="8" cy="8" r="6.4" fill="none" stroke="#06be06" stroke-width="2.2"/><circle cx="8" cy="8" r="3.7" fill="#04b804"/></g></svg>
<div class="t" style="left:923px;top:760px;font-size:13px;line-height:17px;letter-spacing:-0.097px;color:#c8c8c8;"><span style="position:relative;left:0.30px">Upper Leg</span></div>
<div class="abs" style="left:1069px;top:759px;width:257px;height:18px;background:#2a2a2a;border-radius:3px;border:1px solid #202020"></div>
<div class="abs" style="left:1307px;top:760px;width:18px;height:16px;background:#373737;border-radius:0 2px 2px 0"></div>
<svg style="left:1310px;top:762px;" width="12" height="12" viewBox="0 0 12 12"><circle cx="6" cy="6" r="4.6" fill="none" stroke="#d2d2d2" stroke-width="1.1"/><circle cx="6" cy="6" r="1.7" fill="#d2d2d2"/></svg>
<svg style="left:1073px;top:763px;" width="10" height="10" viewBox="0 0 10 10"><g transform="translate(0.000 0.500)"><path d="M5 5.6V0.8" stroke="#9be040" stroke-width="1.5"/><path d="M5 5.6L0.8 8.4" stroke="#56b8f0" stroke-width="1.5"/><path d="M5 5.6L9.2 8.4" stroke="#f0683c" stroke-width="1.5"/></g></svg>
<div class="t" style="left:1085px;top:760px;font-size:13px;line-height:17px;letter-spacing:-0.292px;color:#c8c8c8;"><span style="position:relative;left:0.30px">UpperLeg_R (Transform)</span></div>
<svg style="left:904px;top:779px;" width="16" height="16" viewBox="0 0 16 16"><g transform="translate(0.500 0.400)"><circle cx="8" cy="8" r="6.4" fill="none" stroke="#06be06" stroke-width="2.2"/><circle cx="8" cy="8" r="3.7" fill="#04b804"/></g></svg>
<div class="t" style="left:923px;top:780px;font-size:13px;line-height:17px;letter-spacing:-0.097px;color:#c8c8c8;"><span style="position:relative;left:0.30px">Lower Leg</span></div>
<div class="abs" style="left:1069px;top:779px;width:257px;height:18px;background:#2a2a2a;border-radius:3px;border:1px solid #202020"></div>
<div class="abs" style="left:1307px;top:780px;width:18px;height:16px;background:#373737;border-radius:0 2px 2px 0"></div>
<svg style="left:1310px;top:782px;" width="12" height="12" viewBox="0 0 12 12"><circle cx="6" cy="6" r="4.6" fill="none" stroke="#d2d2d2" stroke-width="1.1"/><circle cx="6" cy="6" r="1.7" fill="#d2d2d2"/></svg>
<svg style="left:1073px;top:783px;" width="10" height="10" viewBox="0 0 10 10"><g transform="translate(0.000 0.500)"><path d="M5 5.6V0.8" stroke="#9be040" stroke-width="1.5"/><path d="M5 5.6L0.8 8.4" stroke="#56b8f0" stroke-width="1.5"/><path d="M5 5.6L9.2 8.4" stroke="#f0683c" stroke-width="1.5"/></g></svg>
<div class="t" style="left:1085px;top:780px;font-size:13px;line-height:17px;letter-spacing:-0.292px;color:#c8c8c8;"><span style="position:relative;left:0.30px">LowerLeg_R (Transform)</span></div>
<svg style="left:904px;top:799px;" width="16" height="16" viewBox="0 0 16 16"><g transform="translate(0.500 0.400)"><circle cx="8" cy="8" r="6.4" fill="none" stroke="#06be06" stroke-width="2.2"/><circle cx="8" cy="8" r="3.7" fill="#04b804"/></g></svg>
<div class="t" style="left:923px;top:800px;font-size:13px;line-height:17px;letter-spacing:-0.094px;color:#c8c8c8;"><span style="position:relative;left:0.30px">Foot</span></div>
<div class="abs" style="left:1069px;top:799px;width:257px;height:18px;background:#2a2a2a;border-radius:3px;border:1px solid #202020"></div>
<div class="abs" style="left:1307px;top:800px;width:18px;height:16px;background:#373737;border-radius:0 2px 2px 0"></div>
<svg style="left:1310px;top:802px;" width="12" height="12" viewBox="0 0 12 12"><circle cx="6" cy="6" r="4.6" fill="none" stroke="#d2d2d2" stroke-width="1.1"/><circle cx="6" cy="6" r="1.7" fill="#d2d2d2"/></svg>
<svg style="left:1073px;top:803px;" width="10" height="10" viewBox="0 0 10 10"><g transform="translate(0.000 0.500)"><path d="M5 5.6V0.8" stroke="#9be040" stroke-width="1.5"/><path d="M5 5.6L0.8 8.4" stroke="#56b8f0" stroke-width="1.5"/><path d="M5 5.6L9.2 8.4" stroke="#f0683c" stroke-width="1.5"/></g></svg>
<div class="t" style="left:1085px;top:800px;font-size:13px;line-height:17px;letter-spacing:-0.342px;color:#c8c8c8;"><span style="position:relative;left:0.30px">Foot_R (Transform)</span></div>
<svg style="left:904px;top:819px;" width="16" height="16" viewBox="0 0 16 16"><g transform="translate(0.500 0.400)"><circle cx="8" cy="8" r="6.4" fill="none" stroke="#7c7c7c" stroke-width="2.1" stroke-dasharray="2.9 2.127" stroke-dashoffset="-1.06"/></g></svg>
<div class="t" style="left:923px;top:820px;font-size:13px;line-height:17px;letter-spacing:-0.099px;color:#c8c8c8;"><span style="position:relative;left:0.30px">Toes</span></div>
<div class="abs" style="left:1069px;top:819px;width:257px;height:18px;background:#2a2a2a;border-radius:3px;border:1px solid #202020"></div>
<div class="abs" style="left:1307px;top:820px;width:18px;height:16px;background:#373737;border-radius:0 2px 2px 0"></div>
<svg style="left:1310px;top:822px;" width="12" height="12" viewBox="0 0 12 12"><circle cx="6" cy="6" r="4.6" fill="none" stroke="#d2d2d2" stroke-width="1.1"/><circle cx="6" cy="6" r="1.7" fill="#d2d2d2"/></svg>
<div class="t" style="left:1072px;top:820px;font-size:13px;line-height:17px;letter-spacing:-0.200px;color:#858585;"><span style="position:relative;left:0.40px">None (Transform)</span></div>
<div class="abs" style="left:885px;top:841px;width:444px;height:22px;background:#3c3c3c;border:1px solid #242424"></div>
<div class="abs" style="left:955px;top:842px;width:46px;height:20px;background:#505050;"></div>
<div class="abs" style="left:954px;top:842px;width:1px;height:20px;background:#2c2c2c;"></div>
<div class="abs" style="left:1001px;top:842px;width:1px;height:20px;background:#2c2c2c;"></div>
<div class="t" style="left:889px;top:844px;font-size:13px;line-height:17px;letter-spacing:-0.209px;color:#c8c8c8;"><span style="position:relative;left:0.40px">Mapping</span></div>
<svg style="left:942px;top:850px;" width="7" height="5" viewBox="0 0 7 5"><g transform="translate(0.300 0.000)"><path d="M0 0H7L3.5 4.6Z" fill="#c8c8c8"/></g></svg>
<div class="t" style="left:958px;top:844px;font-size:13px;line-height:17px;letter-spacing:-0.557px;color:#d0d0d0;"><span style="position:relative;left:0.60px">Pose</span></div>
<svg style="left:988px;top:850px;" width="7" height="5" viewBox="0 0 7 5"><g transform="translate(0.600 0.000)"><path d="M0 0H7L3.5 4.6Z" fill="#d0d0d0"/></g></svg>
<div class="abs" style="left:1187px;top:872px;width:48px;height:17px;background:#474747;border-radius:3px"></div>
<div class="abs" style="left:1241px;top:872px;width:42px;height:17px;background:#474747;border-radius:3px"></div>
<div class="abs" style="left:1288px;top:872px;width:40px;height:17px;background:#585858;border-radius:3px"></div>
<div class="t" style="left:1193px;top:872px;font-size:13px;line-height:17px;letter-spacing:-0.315px;color:#8a8a8a;"><span style="position:relative;left:0.10px">Revert</span></div>
<div class="t" style="left:1245px;top:872px;font-size:13px;line-height:17px;letter-spacing:-0.263px;color:#8a8a8a;"><span style="position:relative;left:0.80px">Apply</span></div>
<div class="t" style="left:1292px;top:872px;font-size:13px;line-height:17px;letter-spacing:-0.269px;color:#e0e0e0;"><span style="position:relative;left:0.90px">Done</span></div>
<div class="abs" style="left:1329px;top:29px;width:4px;height:860px;background:#383838;"></div>
<div class="abs" style="left:1333px;top:29px;width:14px;height:860px;background:#353535;border-left:1px solid #303030"></div>
<div class="abs" style="left:1346px;top:29px;width:1px;height:860px;background:#222;"></div>
<div class="abs" style="left:1335px;top:181px;width:10px;height:662px;background:#5f5f5f;border-radius:5px"></div>
<svg style="left:1336px;top:33px;" width="8" height="5" viewBox="0 0 8 5"><g transform="translate(0.000 0.500)"><path d="M0 5H8L4 0Z" fill="#c0c0c0"/></g></svg>
<svg style="left:1336px;top:879px;" width="8" height="5" viewBox="0 0 8 5"><path d="M0 0H8L4 5Z" fill="#c0c0c0"/></svg>
<div class="abs" style="left:880px;top:889px;width:467px;height:1px;background:#1a1a1a;"></div>
<div class="abs" style="left:880px;top:890px;width:467px;height:25px;background:#3c3c3c;"></div>
<div class="t" style="left:884px;top:895px;font-size:12.5px;line-height:16.5px;letter-spacing:-0.176px;color:#c4c4c4;font-weight:bold;"><span style="position:relative;left:0.20px">Asset Labels</span></div>
<div class="abs" style="left:880px;top:915px;width:467px;height:1px;background:#1a1a1a;"></div>
<div class="abs" style="left:880px;top:916px;width:467px;height:22px;background:#3c3c3c;"></div>
<svg style="left:1322px;top:921px;" width="20" height="15" viewBox="0 0 20 15"><rect x="0" y="0" width="20" height="15" rx="7.5" fill="#1f4a8c"/><path d="M5 3.4L9.4 3.2L14.6 8.2L11 12L5.2 7.2Z" fill="#f0f0f0"/><circle cx="7.4" cy="5.4" r="1" fill="#1f4a8c"/></svg>
<div class="abs" style="left:955px;top:862px;width:186px;height:72px;background:#f2f2f2;border:1px solid #cfcfcf;box-shadow:3px 3px 4px rgba(0,0,0,0.55)"></div>
<div class="abs" style="left:956px;top:863px;width:30px;height:70px;background:#f0f0f0;"></div>
<div class="abs" style="left:958px;top:909px;width:180px;height:22px;background:#91c9f7;"></div>
<div class="t" style="left:990px;top:867px;font-size:13px;line-height:17px;letter-spacing:-1.272px;color:#000;"><span style="position:relative;left:0.20px">Reset</span></div>
<div class="t" style="left:990px;top:889px;font-size:13px;line-height:17px;letter-spacing:-0.729px;color:#000;"><span style="position:relative;left:0.20px">Sample Bind-Pose</span></div>
<div class="t" style="left:990px;top:911px;font-size:13px;line-height:17px;letter-spacing:-0.740px;color:#000;"><span style="position:relative;left:0.20px">Enforce T-Pose</span></div>
</div>
</div>
</body></html>
